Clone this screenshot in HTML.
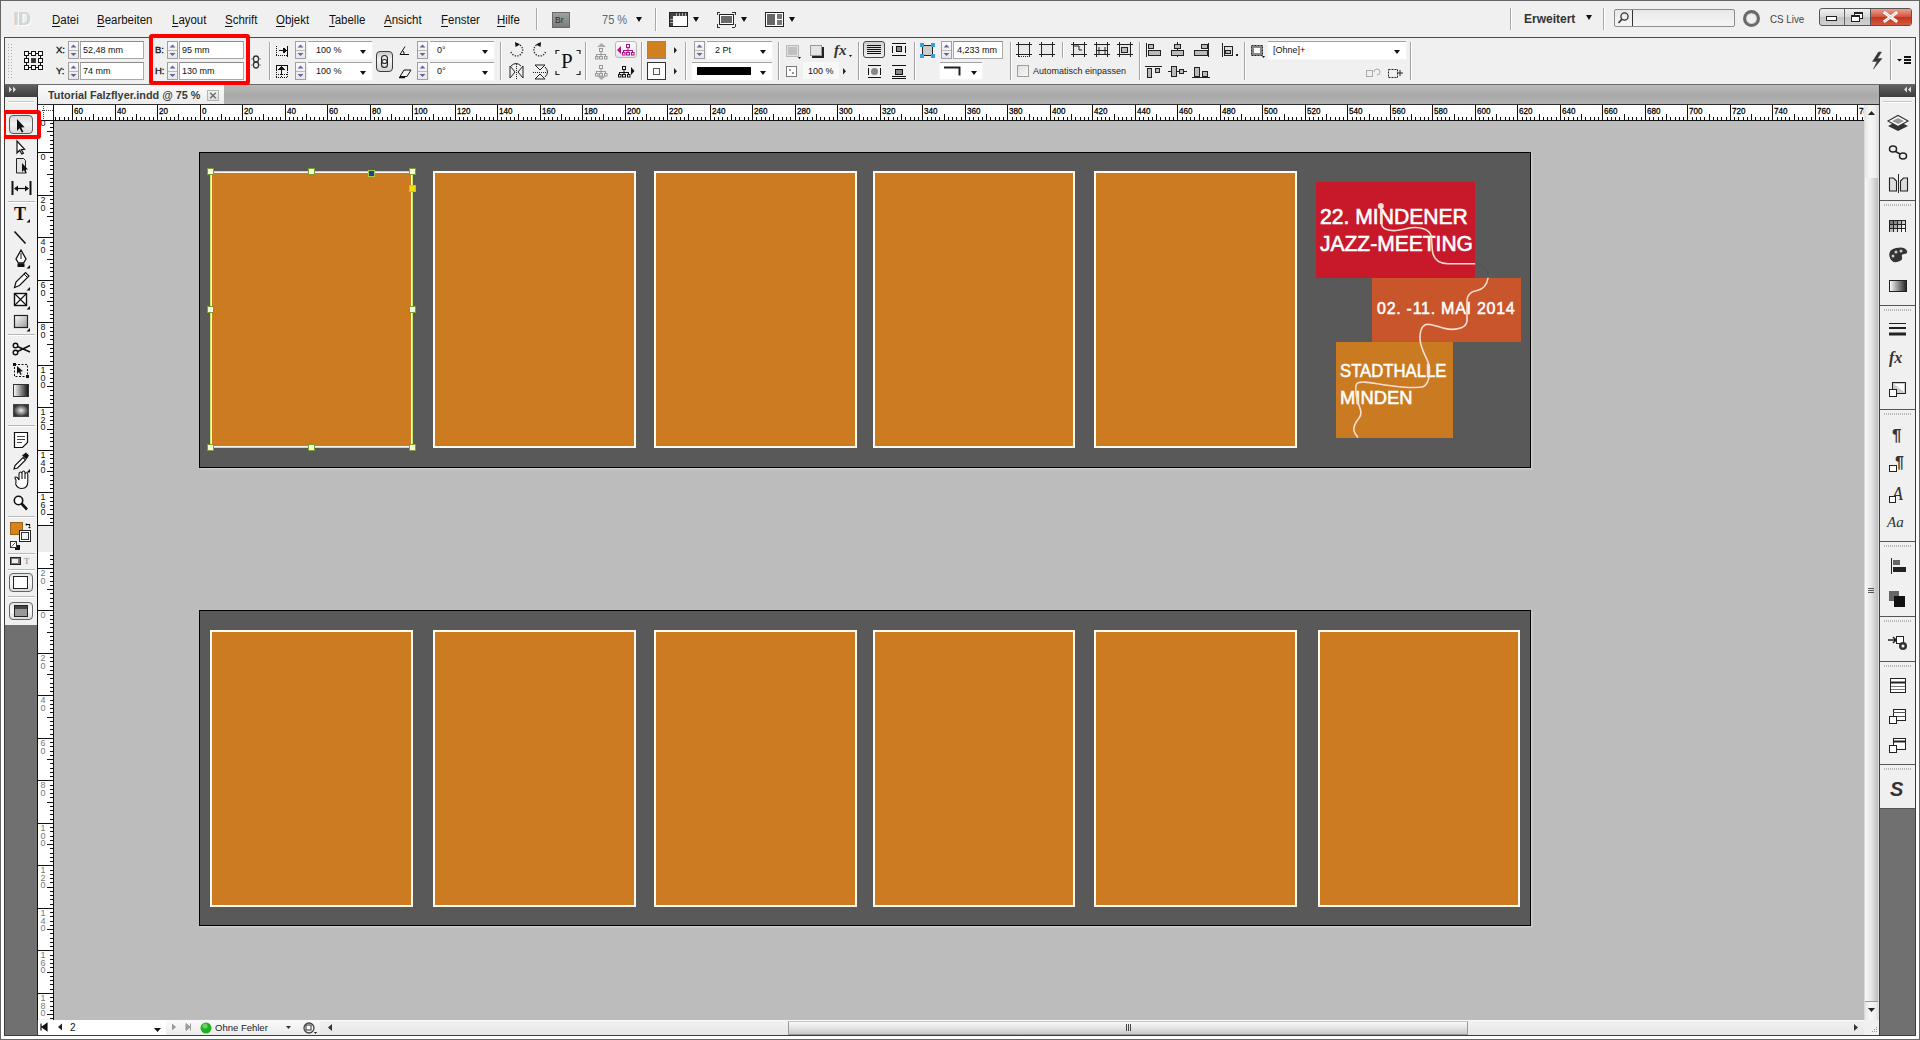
<!DOCTYPE html>
<html><head><meta charset="utf-8">
<style>
*{margin:0;padding:0;box-sizing:border-box}
html,body{width:1920px;height:1040px;overflow:hidden;background:#f0f0f0;font-family:"Liberation Sans",sans-serif;position:relative}
.a{position:absolute}
.fr{background:#cc7b21;border:2px solid #fffaf0}
.hd{width:7px;height:7px;background:#f2fcd8;border:1px solid #7c9c30}
.rl{font-size:9.5px;color:#000;-webkit-text-stroke:0.3px #000;transform:scaleX(0.85);transform-origin:0 0}
.vl{font-size:9px;line-height:7.7px;width:6px;text-align:center;color:#111}
.vl div{height:7.7px}
.mn{font-size:12px;color:#111;transform:scaleX(0.955);transform-origin:0 0}
.mn u{text-decoration:underline;text-underline-offset:1.5px}
.spn{border:1px solid #a0a0a0;background:linear-gradient(#fafafa,#e8e8e8)}
.inb{background:#fff;border:1px solid #a8a8a8;border-top-color:#8a8a8a}
.ind{background:#fff;border-top:1px solid #a0a0a0;box-shadow:0 0 0 1px #f4f4f4}
.ct{font-size:9px;color:#111}
.cl{font-size:9.5px;color:#1a1a1a;-webkit-text-stroke:0.35px #1a1a1a}
.t{position:absolute;white-space:pre;line-height:1}
</style></head><body>
<!-- window border -->
<div class="a" style="left:0;top:0;width:1920px;height:1040px;border:1px solid #666"></div>

<!-- ===== MENU BAR ===== -->
<!--MENU-->
<div class="t" style="left:14px;top:9px;font-size:19px;font-weight:bold;color:#d6d6d6;text-shadow:1px 1px 0 #fff, -0.5px -0.5px 0 #c4c4c4;transform:scaleX(0.9);transform-origin:0 0">ID</div>
<div class="t mn" style="left:52px;top:14px"><u>D</u>atei</div>
<div class="t mn" style="left:97px;top:14px"><u>B</u>earbeiten</div>
<div class="t mn" style="left:172px;top:14px"><u>L</u>ayout</div>
<div class="t mn" style="left:225px;top:14px"><u>S</u>chrift</div>
<div class="t mn" style="left:276px;top:14px"><u>O</u>bjekt</div>
<div class="t mn" style="left:329px;top:14px"><u>T</u>abelle</div>
<div class="t mn" style="left:384px;top:14px"><u>A</u>nsicht</div>
<div class="t mn" style="left:441px;top:14px"><u>F</u>enster</div>
<div class="t mn" style="left:497px;top:14px"><u>H</u>ilfe</div>
<div class="a" style="left:536px;top:8px;width:1px;height:22px;background:#a8a8a8;box-shadow:1px 0 0 #fff"></div>
<div class="a" style="left:552px;top:12px;width:18px;height:16px;background:linear-gradient(#a0a0a0,#7c7c7c);border:1px solid #6a6a6a"></div>
<div class="t" style="left:555px;top:16px;font-size:8.5px;color:#2a2a2a">Br</div>
<div class="t" style="left:602px;top:14px;font-size:12px;color:#5d6a76;transform:scaleX(0.92);transform-origin:0 0">75 %</div>
<div class="a" style="left:636px;top:17px;width:0;height:0;border-left:3.5px solid transparent;border-right:3.5px solid transparent;border-top:5px solid #111"></div>
<div class="a" style="left:655px;top:8px;width:1px;height:23px;background:#a8a8a8;box-shadow:1px 0 0 #fff"></div>
<svg class="a" style="left:660px;top:8px" width="140" height="24" shape-rendering="crispEdges">
<rect x="9.5" y="4.5" width="18" height="14" fill="#fff" stroke="#222"/>
<rect x="10" y="5" width="17" height="3" fill="#444"/><rect x="10" y="5" width="3" height="13" fill="#444"/>
<path d="M16 5v3M19 5v3M22 5v3M25 5v3M10 11h3M10 14h3" stroke="#aaa"/>
<path d="M57 4h3M57 4v3M75 4h-3M75 4v3M57 19h3M57 19v-3M75 19h-3M75 19v-3" stroke="#333" fill="none"/>
<rect x="59.5" y="6.5" width="14" height="10" fill="#fff" stroke="#222"/><rect x="61" y="8" width="11" height="7" fill="#6a6a6a"/>
<rect x="105.5" y="4.5" width="18" height="14" fill="#fff" stroke="#222"/>
<rect x="107" y="6" width="8" height="11" fill="#666"/><rect x="117" y="6" width="5" height="5" fill="#777"/><rect x="117" y="12" width="5" height="5" fill="#777"/>
</svg>
<div class="a" style="left:693px;top:17px;width:0;height:0;border-left:3.5px solid transparent;border-right:3.5px solid transparent;border-top:5px solid #111"></div>
<div class="a" style="left:741px;top:17px;width:0;height:0;border-left:3.5px solid transparent;border-right:3.5px solid transparent;border-top:5px solid #111"></div>
<div class="a" style="left:789px;top:17px;width:0;height:0;border-left:3.5px solid transparent;border-right:3.5px solid transparent;border-top:5px solid #111"></div>
<div class="a" style="left:1510px;top:8px;width:1px;height:22px;background:#a8a8a8;box-shadow:1px 0 0 #fff"></div>
<div class="t" style="left:1524px;top:12.5px;font-size:12px;font-weight:bold;color:#333">Erweitert</div>
<div class="a" style="left:1586px;top:15px;width:0;height:0;border-left:3.5px solid transparent;border-right:3.5px solid transparent;border-top:5px solid #111"></div>
<div class="a" style="left:1603px;top:8px;width:1px;height:22px;background:#a8a8a8;box-shadow:1px 0 0 #fff"></div>
<div class="a" style="left:1614px;top:9px;width:121px;height:18px;background:linear-gradient(#e8e8e8,#f6f6f6);border:1px solid #8c8c8c;border-radius:2px"></div>
<div class="a" style="left:1632px;top:10px;width:1px;height:16px;background:#333"></div>
<svg class="a" style="left:1614px;top:9px" width="20" height="18"><circle cx="10.5" cy="7.5" r="3.6" fill="none" stroke="#333" stroke-width="1.3"/><path d="M8 10 L4.5 14" stroke="#333" stroke-width="1.6"/></svg>
<div class="a" style="left:1743px;top:10px;width:17px;height:17px;border-radius:50%;border:3.5px solid #6a6a6a;box-shadow:inset 0 0 1px #333"></div>
<div class="t" style="left:1770px;top:14px;font-size:10.5px;color:#444;transform:scaleX(0.93);transform-origin:0 0">CS Live</div>
<div class="a" style="left:1819px;top:8px;width:93px;height:18px;border:1px solid #555;border-radius:3px;background:linear-gradient(#f0f0f0,#d8d8d8 50%,#c4c4c4 51%,#d0d0d0);overflow:hidden"></div>
<div class="a" style="left:1844px;top:9px;width:1px;height:16px;background:#666"></div>
<div class="a" style="left:1870px;top:9px;width:41px;height:16px;background:linear-gradient(#e9a090,#d2533c 50%,#c03820 51%,#d25a40);border-left:1px solid #555;border-radius:0 2px 2px 0"></div>
<div class="a" style="left:1826px;top:16px;width:11px;height:5px;border:1px solid #222;background:#fff"></div>
<svg class="a" style="left:1846px;top:9px" width="24" height="16" shape-rendering="crispEdges"><rect x="8.5" y="3.5" width="8" height="6" fill="#fff" stroke="#222"/><rect x="5.5" y="6.5" width="8" height="6" fill="#fff" stroke="#222"/><path d="M6 7.5h7M9 4.5h7" stroke="#222"/></svg>
<svg class="a" style="left:1870px;top:9px" width="41" height="16"><path d="M15 4 L26 12 M26 4 L15 12" stroke="#fff" stroke-width="3" stroke-linecap="square"/><path d="M15 4 L26 12 M26 4 L15 12" stroke="#555" stroke-width="0.6" opacity="0.4"/></svg>
<!--/MENU-->

<!-- ===== CONTROL PANEL ===== -->
<div class="a" style="left:4px;top:37px;width:1912px;height:48px;border:1px solid #4a4a4a;border-bottom-color:#6a6a6a;background:#f0f0f0"></div>
<!--CTRL-->
<div class="t cl" style="left:56px;top:45px">X:</div>
<div class="t cl" style="left:56px;top:66px">Y:</div>
<div class="a spn" style="left:68px;top:41px;width:11px;height:18px"></div>
<div class="a spn" style="left:68px;top:62px;width:11px;height:18px"></div>
<div class="a inb" style="left:80px;top:41px;width:64px;height:18px"></div>
<div class="t ct" style="left:83px;top:46px">52,48 mm</div>
<div class="a inb" style="left:80px;top:62px;width:64px;height:18px"></div>
<div class="t ct" style="left:83px;top:67px">74 mm</div>
<div class="t cl" style="left:155px;top:45px">B:</div>
<div class="t cl" style="left:155px;top:66px">H:</div>
<div class="a spn" style="left:167px;top:41px;width:11px;height:18px"></div>
<div class="a spn" style="left:167px;top:62px;width:11px;height:18px"></div>
<div class="a inb" style="left:179px;top:41px;width:65px;height:18px"></div>
<div class="t ct" style="left:182px;top:46px">95 mm</div>
<div class="a inb" style="left:179px;top:62px;width:65px;height:18px"></div>
<div class="t ct" style="left:182px;top:67px">130 mm</div>
<div class="a" style="left:269px;top:42px;width:1px;height:38px;background:#a4a4a4;box-shadow:1px 0 0 #fff"></div>
<div class="a spn" style="left:295px;top:41px;width:11px;height:18px"></div>
<div class="a spn" style="left:295px;top:62px;width:11px;height:18px"></div>
<div class="a ind" style="left:308px;top:41px;width:64px;height:18px"></div>
<div class="t ct" style="left:316px;top:46px">100 %</div>
<div class="a" style="left:360px;top:50px;width:0;height:0;border-left:3.5px solid transparent;border-right:3.5px solid transparent;border-top:4px solid #111"></div>
<div class="a ind" style="left:308px;top:62px;width:64px;height:18px"></div>
<div class="t ct" style="left:316px;top:67px">100 %</div>
<div class="a" style="left:360px;top:71px;width:0;height:0;border-left:3.5px solid transparent;border-right:3.5px solid transparent;border-top:4px solid #111"></div>
<div class="a" style="left:376px;top:51px;width:17px;height:21px;border:1px solid #3c3c3c;border-radius:4px;background:linear-gradient(#c8c8c8,#f4f4f4 40%,#d4d4d4)"></div>
<div class="a spn" style="left:417px;top:41px;width:11px;height:18px"></div>
<div class="a spn" style="left:417px;top:62px;width:11px;height:18px"></div>
<div class="a ind" style="left:430px;top:41px;width:64px;height:18px"></div>
<div class="t ct" style="left:437px;top:46px">0°</div>
<div class="a" style="left:482px;top:50px;width:0;height:0;border-left:3.5px solid transparent;border-right:3.5px solid transparent;border-top:4px solid #111"></div>
<div class="a ind" style="left:430px;top:62px;width:64px;height:18px"></div>
<div class="t ct" style="left:437px;top:67px">0°</div>
<div class="a" style="left:482px;top:71px;width:0;height:0;border-left:3.5px solid transparent;border-right:3.5px solid transparent;border-top:4px solid #111"></div>
<div class="a" style="left:500px;top:42px;width:1px;height:38px;background:#a4a4a4;box-shadow:1px 0 0 #fff"></div>
<div class="t" style="left:561px;top:51px;font-family:'Liberation Serif',serif;font-size:21px;color:#111">P</div>
<div class="a" style="left:585px;top:42px;width:1px;height:38px;background:#a4a4a4;box-shadow:1px 0 0 #fff"></div>
<div class="a" style="left:615px;top:41px;width:22px;height:17px;border:1px solid #b8b8b8;border-radius:3px;background:linear-gradient(#fafafa,#e4e4e4)"></div>
<div class="a" style="left:641px;top:42px;width:1px;height:38px;background:#a4a4a4;box-shadow:1px 0 0 #fff"></div>
<div class="a" style="left:647px;top:41px;width:19px;height:18px;border:1px solid #888;background:#d27f20"></div>
<div class="a" style="left:647px;top:62px;width:19px;height:18px;border:1px solid #333;background:#fff"></div>
<div class="a" style="left:653px;top:68px;width:7px;height:7px;border:1px solid #555;background:#fff"></div>
<div class="a" style="left:685px;top:42px;width:1px;height:38px;background:#a4a4a4;box-shadow:1px 0 0 #fff"></div>
<div class="a spn" style="left:694px;top:41px;width:11px;height:18px"></div>
<div class="a ind" style="left:707px;top:41px;width:65px;height:18px"></div>
<div class="t ct" style="left:715px;top:46px">2 Pt</div>
<div class="a" style="left:760px;top:50px;width:0;height:0;border-left:3.5px solid transparent;border-right:3.5px solid transparent;border-top:4px solid #111"></div>
<div class="a ind" style="left:692px;top:62px;width:80px;height:18px"></div>
<div class="a" style="left:697px;top:67px;width:54px;height:8px;background:#000"></div>
<div class="a" style="left:760px;top:71px;width:0;height:0;border-left:3.5px solid transparent;border-right:3.5px solid transparent;border-top:4px solid #111"></div>
<div class="a" style="left:778px;top:42px;width:1px;height:38px;background:#a4a4a4;box-shadow:1px 0 0 #fff"></div>
<div class="t" style="left:834px;top:43px;font-family:'Liberation Serif',serif;font-style:italic;font-weight:bold;font-size:15px;color:#333">fx</div>
<div class="a" style="left:803px;top:62px;width:36px;height:17px;background:#f8f8f8"></div>
<div class="t ct" style="left:808px;top:67px">100 %</div>
<div class="a" style="left:858px;top:42px;width:1px;height:38px;background:#a4a4a4;box-shadow:1px 0 0 #fff"></div>
<div class="a" style="left:863px;top:41px;width:22px;height:17px;border:1px solid #4a4a4a;border-radius:3px;background:linear-gradient(#d0d0d0,#f0f0f0)"></div>
<div class="a" style="left:914px;top:42px;width:1px;height:38px;background:#a4a4a4;box-shadow:1px 0 0 #fff"></div>
<div class="a spn" style="left:941px;top:41px;width:11px;height:18px"></div>
<div class="a inb" style="left:953px;top:41px;width:50px;height:18px"></div>
<div class="t ct" style="left:957px;top:46px">4,233 mm</div>
<div class="a ind" style="left:940px;top:62px;width:42px;height:17px"></div>
<div class="a" style="left:971px;top:71px;width:0;height:0;border-left:3.5px solid transparent;border-right:3.5px solid transparent;border-top:4px solid #111"></div>
<div class="a" style="left:1010px;top:42px;width:1px;height:38px;background:#a4a4a4;box-shadow:1px 0 0 #fff"></div>
<div class="a" style="left:1062px;top:42px;width:1px;height:16px;background:#a4a4a4;box-shadow:1px 0 0 #fff"></div>
<div class="a" style="left:1017px;top:65px;width:12px;height:12px;border:1px solid #9c9c9c;background:linear-gradient(135deg,#e0e0e0,#f8f8f8)"></div>
<div class="t ct" style="left:1033px;top:67px;color:#222">Automatisch einpassen</div>
<div class="a" style="left:1139px;top:42px;width:1px;height:38px;background:#a4a4a4;box-shadow:1px 0 0 #fff"></div>
<div class="a" style="left:1244px;top:42px;width:1px;height:38px;background:#a4a4a4;box-shadow:1px 0 0 #fff"></div>
<div class="a ind" style="left:1268px;top:41px;width:138px;height:18px"></div>
<div class="t ct" style="left:1273px;top:46px">[Ohne]+</div>
<div class="a" style="left:1394px;top:50px;width:0;height:0;border-left:3.5px solid transparent;border-right:3.5px solid transparent;border-top:4px solid #111"></div>
<div class="a" style="left:1410px;top:42px;width:1px;height:38px;background:#a4a4a4;box-shadow:1px 0 0 #fff"></div>
<div class="a" style="left:1890px;top:40px;width:1px;height:40px;background:#a4a4a4;box-shadow:1px 0 0 #fff"></div>
<svg class="a" style="left:0;top:0" width="1920" height="90"><g fill="#b0b0b0"><rect x="8" y="44" width="1" height="1"/><rect x="11" y="44" width="1" height="1"/><rect x="8" y="47" width="1" height="1"/><rect x="11" y="47" width="1" height="1"/><rect x="8" y="50" width="1" height="1"/><rect x="11" y="50" width="1" height="1"/><rect x="8" y="53" width="1" height="1"/><rect x="11" y="53" width="1" height="1"/><rect x="8" y="56" width="1" height="1"/><rect x="11" y="56" width="1" height="1"/><rect x="8" y="59" width="1" height="1"/><rect x="11" y="59" width="1" height="1"/><rect x="8" y="62" width="1" height="1"/><rect x="11" y="62" width="1" height="1"/><rect x="8" y="65" width="1" height="1"/><rect x="11" y="65" width="1" height="1"/><rect x="8" y="68" width="1" height="1"/><rect x="11" y="68" width="1" height="1"/><rect x="8" y="71" width="1" height="1"/><rect x="11" y="71" width="1" height="1"/><rect x="8" y="74" width="1" height="1"/><rect x="11" y="74" width="1" height="1"/><rect x="8" y="77" width="1" height="1"/><rect x="11" y="77" width="1" height="1"/></g>
<path d="M29 53.5h2M36 53.5h2M29 67.5h2M36 67.5h2M26.5 56v2M26.5 63v2M40.5 56v2M40.5 63v2" stroke="#111"/><rect x="24.5" y="51.5" width="4" height="4" fill="#fff" stroke="#111"/><rect x="24.5" y="58.5" width="4" height="4" fill="#fff" stroke="#111"/><rect x="24.5" y="65.5" width="4" height="4" fill="#fff" stroke="#111"/><rect x="31.5" y="51.5" width="4" height="4" fill="#fff" stroke="#111"/><rect x="31.5" y="58.5" width="4" height="4" fill="#333" stroke="#444"/><rect x="31.5" y="65.5" width="4" height="4" fill="#fff" stroke="#111"/><rect x="38.5" y="51.5" width="4" height="4" fill="#fff" stroke="#111"/><rect x="38.5" y="58.5" width="4" height="4" fill="#fff" stroke="#111"/><rect x="38.5" y="65.5" width="4" height="4" fill="#fff" stroke="#111"/>
<path d="M70.5,47.5 L76.5,47.5 L73.5,44.5Z M70.5,53 L76.5,53 L73.5,56Z" fill="#6464a0"/>
<line x1="69" y1="50.5" x2="78" y2="50.5" stroke="#b8b8b8"/>
<path d="M70.5,68.5 L76.5,68.5 L73.5,65.5Z M70.5,74 L76.5,74 L73.5,77Z" fill="#6464a0"/>
<line x1="69" y1="71.5" x2="78" y2="71.5" stroke="#b8b8b8"/>
<path d="M169.5,47.5 L175.5,47.5 L172.5,44.5Z M169.5,53 L175.5,53 L172.5,56Z" fill="#6464a0"/>
<line x1="168" y1="50.5" x2="177" y2="50.5" stroke="#b8b8b8"/>
<path d="M169.5,68.5 L175.5,68.5 L172.5,65.5Z M169.5,74 L175.5,74 L172.5,77Z" fill="#6464a0"/>
<line x1="168" y1="71.5" x2="177" y2="71.5" stroke="#b8b8b8"/>
<g fill="none" stroke="#333" stroke-width="1.3"><rect x="253.5" y="56" width="5" height="6" rx="2.5"/><rect x="253.5" y="62" width="5" height="6" rx="2.5"/></g><path d="M251 59h2M259 59h2M251 65h2M259 65h2" stroke="#888"/>
<g stroke="#111" fill="none" shape-rendering="crispEdges"><path d="M276.5 46v10M276 55.5h12" stroke-dasharray="1,1"/><path d="M287.5 46v11"/><path d="M279 50.5h5"/><path d="M283 48 l3.5 2.5 -3.5 2.5z" fill="#111"/><path d="M276 65.5h12M276.5 65v6M287.5 65v6"/><path d="M276 74.5h12M276 77.5h12M276.5 72v6M281.5 72v6M287.5 72v6" stroke-dasharray="1,1"/><path d="M281.5 68v6"/><path d="M279 69.5 l2.5-3 2.5 3z" fill="#111"/></g>
<path d="M297.5,47.5 L303.5,47.5 L300.5,44.5Z M297.5,53 L303.5,53 L300.5,56Z" fill="#6464a0"/>
<line x1="296" y1="50.5" x2="305" y2="50.5" stroke="#b8b8b8"/>
<path d="M297.5,68.5 L303.5,68.5 L300.5,65.5Z M297.5,74 L303.5,74 L300.5,77Z" fill="#6464a0"/>
<line x1="296" y1="71.5" x2="305" y2="71.5" stroke="#b8b8b8"/>
<g fill="none" stroke="#222" stroke-width="1.1"><rect x="381.5" y="55.5" width="6" height="8" rx="3"/><rect x="381.5" y="59.5" width="6" height="8" rx="3"/></g>
<g stroke="#111" fill="none"><path d="M400 54.5h9M400 54.5 L405 46.5 M402.5 50.5 q2 1 1.5 4"/></g>
<g stroke="#111" fill="none"><path d="M400 76.5 L404 70 L411 70 L407 76.5Z"/><path d="M399 77.5 L405 77.5" stroke-width="1.5"/></g>
<path d="M419.5,47.5 L425.5,47.5 L422.5,44.5Z M419.5,53 L425.5,53 L422.5,56Z" fill="#6464a0"/>
<line x1="418" y1="50.5" x2="427" y2="50.5" stroke="#b8b8b8"/>
<path d="M419.5,68.5 L425.5,68.5 L422.5,65.5Z M419.5,74 L425.5,74 L422.5,77Z" fill="#6464a0"/>
<line x1="418" y1="71.5" x2="427" y2="71.5" stroke="#b8b8b8"/>
<g stroke="#222" fill="none" stroke-dasharray="1.3,1.3" stroke-width="1.3"><path d="M511 52 A6 6 0 1 0 516 44"/><path d="M545.5 52 A6 6 0 1 1 540.5 44"/></g>
<path d="M515 42 l5 2.5 -4.5 2.5z M541 42 l-5 2.5 4.5 2.5z" fill="#111"/>
<g stroke="#222" fill="none" stroke-width="1"><path d="M510 66v12l5-6z M523 66v12l-5-6z"/><path d="M516.5 64v15" stroke-dasharray="1,1"/><path d="M511 66 q5-5 10 0" /></g>
<g stroke="#222" fill="none" stroke-width="1"><path d="M535 65h10l-5 5z M535 79h10l-5-5z"/><path d="M533 72.5h14" stroke-dasharray="1,1"/><path d="M545 67 q5 5 0 10"/></g>
<path d="M556 54v-3.5h3.5M580 54v-3.5h-3.5M556 71v3.5h3.5M580 71v3.5h-3.5" stroke="#222" fill="none" stroke-width="1.2"/>
<path d="M597 47h9l-4.5-4z" fill="#aaa"/><g stroke="#999" fill="none" stroke-width="1"><rect x="599.5" y="48.5" width="3" height="3"/><path d="M601 52v2M596.5 54.5h9M596.5 54v2M601 54v2M605.5 54v2"/><rect x="595.5" y="56.5" width="2.5" height="2.5"/><rect x="599.5" y="56.5" width="3" height="2.5"/><rect x="604.5" y="56.5" width="2.5" height="2.5"/></g>
<g stroke="#999" fill="none" stroke-width="1"><rect x="599.5" y="65.5" width="3" height="3"/><path d="M601 69v2M596.5 71.5h9M596.5 71v2M601 71v2M605.5 71v2"/><rect x="595.5" y="73.5" width="2.5" height="2.5"/><rect x="599.5" y="73.5" width="3" height="2.5"/><rect x="604.5" y="73.5" width="2.5" height="2.5"/></g><path d="M597 76h9l-4.5 4z" fill="#aaa"/>
<path d="M617 50l4-4v8z" fill="#b0148c"/><g stroke="#b0148c" fill="none" stroke-width="1"><rect x="626.5" y="44.5" width="3" height="3"/><path d="M628 48v2M623.5 50.5h9M623.5 50v2M628 50v2M632.5 50v2"/><rect x="622.5" y="52.5" width="2.5" height="2.5"/><rect x="626.5" y="52.5" width="3" height="2.5"/><rect x="631.5" y="52.5" width="2.5" height="2.5"/></g>
<g stroke="#111" fill="none" stroke-width="1"><rect x="622.5" y="66.5" width="3" height="3"/><path d="M624 70v2M619.5 72.5h9M619.5 72v2M624 72v2M628.5 72v2"/><rect x="618.5" y="74.5" width="2.5" height="2.5"/><rect x="622.5" y="74.5" width="3" height="2.5"/><rect x="627.5" y="74.5" width="2.5" height="2.5"/></g><path d="M631 67l3.5 4-3.5 4z" fill="#111"/>
<path d="M674 47l3 3.2-3 3.2z M674 68l3 3.2-3 3.2z" fill="#222"/>
<path d="M696.5,47.5 L702.5,47.5 L699.5,44.5Z M696.5,53 L702.5,53 L699.5,56Z" fill="#6464a0"/>
<line x1="695" y1="50.5" x2="704" y2="50.5" stroke="#b8b8b8"/>
<rect x="786.5" y="45.5" width="12" height="11" fill="#e0e0e0" stroke="#888" stroke-dasharray="1,1"/><rect x="788" y="47" width="9" height="8" fill="#aaa" opacity="0.6"/><path d="M798 57h3l-1.5 2z" fill="#111"/>
<rect x="812" y="47" width="12" height="11" fill="#222"/><rect x="810.5" y="45.5" width="11" height="10" fill="#e4e4e4" stroke="#999"/>
<path d="M849 55h3l-1.5 2z" fill="#111"/>
<rect x="786.5" y="66.5" width="10" height="10" fill="#fff" stroke="#777"/><rect x="789" y="69" width="2" height="2" fill="#999"/><rect x="792" y="72" width="2" height="2" fill="#999"/>
<path d="M843 68l3 3.2-3 3.2z" fill="#222"/>
<g stroke="#111" shape-rendering="crispEdges"><line x1="867" y1="45.5" x2="881" y2="45.5"/><line x1="867" y1="47.5" x2="881" y2="47.5"/><line x1="867" y1="49.5" x2="881" y2="49.5"/><line x1="867" y1="51.5" x2="881" y2="51.5"/><line x1="867" y1="53.5" x2="881" y2="53.5"/></g>
<g stroke="#111" shape-rendering="crispEdges"><line x1="892" y1="43.5" x2="906" y2="43.5"/><line x1="892" y1="55.5" x2="906" y2="55.5"/><path d="M892.5 46v7M905.5 46v7"/><rect x="896.5" y="46.5" width="5" height="5" fill="#888"/></g>
<g stroke="#111" shape-rendering="crispEdges"><line x1="868" y1="65.5" x2="881" y2="65.5"/><line x1="868" y1="77.5" x2="881" y2="77.5"/><path d="M868.5 68v7M880.5 68v7"/></g><circle cx="874.5" cy="71.5" r="3.5" fill="#888"/>
<g stroke="#111" shape-rendering="crispEdges"><line x1="892" y1="65.5" x2="906" y2="65.5"/><line x1="892" y1="76.5" x2="906" y2="76.5"/><line x1="892" y1="78.5" x2="906" y2="78.5"/><rect x="895.5" y="69.5" width="7" height="5" fill="#888"/></g>
<rect x="922.5" y="45.5" width="10" height="10" fill="#ccc" stroke="#222"/><g fill="#3aa0dc"><rect x="920" y="43" width="4" height="4"/><rect x="931" y="43" width="4" height="4"/><rect x="920" y="54" width="4" height="4"/><rect x="931" y="54" width="4" height="4"/></g>
<path d="M943.5,47.5 L949.5,47.5 L946.5,44.5Z M943.5,53 L949.5,53 L946.5,56Z" fill="#6464a0"/>
<line x1="942" y1="50.5" x2="951" y2="50.5" stroke="#b8b8b8"/>
<path d="M944 67.5h15.5v8" stroke="#222" stroke-width="2" fill="none"/>
<g stroke="#222" fill="none"><rect x="1018.5" y="44.5" width="11" height="10" fill="#e8e8e8"/><path d="M1016 44.5h3M1029 44.5h3M1016 54.5h3M1029 54.5h3M1018.5 42v3M1029.5 42v3M1018.5 54v3M1029.5 54v3"/></g>
<g stroke="#222" fill="none"><rect x="1041.5" y="44.5" width="11" height="10" fill="#e8e8e8"/><path d="M1039 44.5h3M1052 44.5h3M1039 54.5h3M1052 54.5h3M1041.5 42v3M1052.5 42v3M1041.5 54v3M1052.5 54v3"/></g>
<g stroke="#222" fill="none"><rect x="1073.5" y="44.5" width="11" height="10" fill="#e8e8e8"/><path d="M1071 44.5h3M1084 44.5h3M1071 54.5h3M1084 54.5h3M1073.5 42v3M1084.5 42v3M1073.5 54v3M1084.5 54v3"/></g>
<g stroke="#222" fill="none"><rect x="1096.5" y="44.5" width="11" height="10" fill="#e8e8e8"/><path d="M1094 44.5h3M1107 44.5h3M1094 54.5h3M1107 54.5h3M1096.5 42v3M1107.5 42v3M1096.5 54v3M1107.5 54v3"/></g>
<g stroke="#222" fill="none"><rect x="1119.5" y="44.5" width="11" height="10" fill="#e8e8e8"/><path d="M1117 44.5h3M1130 44.5h3M1117 54.5h3M1130 54.5h3M1119.5 42v3M1130.5 42v3M1119.5 54v3M1130.5 54v3"/></g>
<path d="M1019 56.5h10" stroke="#222" stroke-dasharray="1,1"/><path d="M1074 46h5v4h3" stroke="#222" fill="none"/><path d="M1099 47v7M1105 47v7M1097 50.5h10" stroke="#222"/><rect x="1121.5" y="47.5" width="6" height="5" fill="#bbb" stroke="#222"/>
<g stroke="#222" fill="#bbb" shape-rendering="crispEdges"><path d="M1146.5 43v14" fill="none"/><rect x="1148.5" y="44.5" width="5" height="4"/><rect x="1148.5" y="50.5" width="12" height="5"/><path d="M1177.5 42v15" fill="none"/><rect x="1174.5" y="44.5" width="6" height="4"/><rect x="1171.5" y="50.5" width="12" height="5"/><path d="M1208.5 43v14" fill="none"/><rect x="1201.5" y="44.5" width="6" height="4"/><rect x="1194.5" y="50.5" width="13" height="5"/><path d="M1222.5 43v14" fill="none"/><rect x="1224.5" y="46.5" width="8" height="9" fill="#e0e0e0"/><rect x="1225.5" y="50.5" width="5" height="3"/></g><rect x="1236" y="54" width="2" height="2" fill="#222"/>
<g stroke="#222" fill="#bbb" shape-rendering="crispEdges"><path d="M1145 66.5h17" fill="none"/><rect x="1147.5" y="68.5" width="4" height="9"/><rect x="1155.5" y="68.5" width="4" height="4"/><path d="M1168 71.5h19" fill="none"/><rect x="1171.5" y="66.5" width="5" height="10"/><rect x="1179.5" y="69.5" width="4" height="4"/><path d="M1192 77.5h18" fill="none"/><rect x="1194.5" y="67.5" width="5" height="9"/><rect x="1202.5" y="71.5" width="5" height="5"/></g>
<rect x="1251.5" y="45.5" width="11" height="10" fill="#888" stroke="#222" stroke-dasharray="2,1"/><rect x="1254" y="48" width="6" height="5" fill="#fff"/><path d="M1262 56h3l-1.5 2z" fill="#111"/>
<g stroke="#aaa" fill="none"><rect x="1366.5" y="70.5" width="6" height="6"/><path d="M1374 72 a3 3 0 1 1 3 3"/></g><g stroke="#222" fill="none"><rect x="1388.5" y="69.5" width="9" height="8" stroke-dasharray="2,1"/><path d="M1400 70v6M1397 73h6"/></g>
<path d="M1878.5 52 L1872.5 61.5 L1877 61.5 L1873.5 69 L1882 58.5 L1877.5 58.5 L1881.5 52Z" fill="#333" stroke="#555" stroke-width="0.6"/>
<path d="M1897 59h5l-2.5 2.5z" fill="#111"/><g stroke="#111" stroke-width="2"><path d="M1904 57h7M1904 60h7M1904 63h7"/></g></svg>
<div class="a" style="left:149px;top:34px;width:101px;height:51px;border:4.5px solid #f00;border-radius:3px"></div>
<!--/CTRL-->

<!-- ===== TAB BAR ===== -->
<div class="a" style="left:38px;top:85px;width:1841px;height:19px;background:linear-gradient(#b9b9b9,#a9a9a9 55%,#b3b3b3)"></div>
<div class="a" style="left:38px;top:85px;width:186px;height:19px;background:linear-gradient(#fafafa,#ececec)"></div>


<!-- left outer strip & tool panel -->
<div class="a" style="left:4px;top:85px;width:34px;height:951px;background:#707070;border-left:1px solid #3c3c3c;border-right:1px solid #3c3c3c"></div>
<div class="a" style="left:5px;top:85px;width:32px;height:12px;background:linear-gradient(#606060,#3e3e3e)"></div>
<div class="a" style="left:5px;top:97px;width:32px;height:528px;background:#f0f0f0"></div>


<!-- right dock -->
<div class="a" style="left:1879px;top:85px;width:37px;height:951px;background:#707070;border-left:1px solid #3c3c3c;border-right:1px solid #3c3c3c"></div>
<div class="a" style="left:1880px;top:85px;width:35px;height:12px;background:linear-gradient(#606060,#3e3e3e)"></div>
<div class="a" style="left:1880px;top:97px;width:35px;height:712px;background:#f0f0f0"></div>


<!-- ===== CANVAS ===== -->
<div class="a" style="left:54px;top:121px;width:1810px;height:899px;background:#bcbcbc"></div>

<!-- spread 1 -->
<div class="a" style="left:199px;top:152px;width:1332px;height:316px;background:#595959;border:1px solid #000;box-shadow:1px 1px 0 #cdcdcd,2px 2px 0 #c4c4c4"></div>
<div class="a fr" style="left:210px;top:171px;width:203px;height:277px"></div>
<div class="a fr" style="left:433px;top:171px;width:203px;height:277px"></div>
<div class="a fr" style="left:654px;top:171px;width:203px;height:277px"></div>
<div class="a fr" style="left:873px;top:171px;width:202px;height:277px"></div>
<div class="a fr" style="left:1094px;top:171px;width:203px;height:277px"></div>
<!-- spread 2 -->
<div class="a" style="left:199px;top:610px;width:1332px;height:316px;background:#595959;border:1px solid #000;box-shadow:1px 1px 0 #cdcdcd,2px 2px 0 #c4c4c4"></div>
<div class="a fr" style="left:210px;top:630px;width:203px;height:277px"></div>
<div class="a fr" style="left:433px;top:630px;width:203px;height:277px"></div>
<div class="a fr" style="left:654px;top:630px;width:203px;height:277px"></div>
<div class="a fr" style="left:873px;top:630px;width:202px;height:277px"></div>
<div class="a fr" style="left:1094px;top:630px;width:203px;height:277px"></div>
<div class="a fr" style="left:1318px;top:630px;width:202px;height:277px"></div>


<!-- logo -->
<div class="a" style="left:1316px;top:182px;width:159px;height:96px;background:#c8192b"></div>
<div class="a" style="left:1372px;top:278px;width:149px;height:64px;background:#c9562a"></div>
<div class="a" style="left:1336px;top:342px;width:117px;height:96px;background:#ca7b22"></div>
<div class="t" style="left:1320px;top:206px;font-size:22px;color:#fff;-webkit-text-stroke:0.6px #fff;transform:scaleX(0.96);transform-origin:0 0">22. MINDENER</div>
<div class="t" style="left:1320px;top:233px;font-size:22px;color:#fff;-webkit-text-stroke:0.6px #fff;transform:scaleX(0.955);transform-origin:0 0">JAZZ-MEETING</div>
<div class="t" style="left:1377px;top:301px;font-size:16px;color:#fff;-webkit-text-stroke:0.5px #fff;letter-spacing:0.73px">02. -11. MAI 2014</div>
<div class="t" style="left:1340px;top:363px;font-size:17.5px;color:#fff;-webkit-text-stroke:0.5px #fff;transform:scaleX(0.955);transform-origin:0 0">STADTHALLE</div>
<div class="t" style="left:1340px;top:390px;font-size:17.5px;color:#fff;-webkit-text-stroke:0.5px #fff;transform:scaleX(1.05);transform-origin:0 0">MINDEN</div>
<svg class="a" style="left:0;top:0" width="1920" height="1040">
<g fill="none" stroke="#f9ddd2" stroke-width="1.6" stroke-linecap="round">
<path d="M1381,206 L1381.7,224 C1382,229 1388,231 1396,230.5 C1403,230 1410,227 1416,227.5 C1424,228 1431,231 1431.5,238 L1432.3,250 C1433,258 1438,263.5 1448,263.8 L1475,263.8"/>
<path d="M1488,278 C1487,285 1484,289 1477,290.5 C1471,291.5 1467.5,294 1467,300 L1467,320 C1467,326 1462,329 1452,329.4 C1442,329.5 1436,324.5 1428,324.2 C1422,324.5 1420,331 1420,338 C1420,350 1428,358 1429.4,367 C1430,374 1429,384 1423,386.8 C1415,389 1400,387 1383,384.7 C1372,383 1360,380 1356.4,384.2 C1355,388 1356,400 1359.6,406.9 C1361,411 1362,414 1359,418 C1355,423 1353,427 1354,431 C1355,434 1357,436 1357.5,437"/>
</g>
<circle cx="1380.8" cy="206" r="3" fill="#f9ddd2"/>
<path d="M1475,263.8 C1483,264 1489,270 1488,278" fill="none" stroke="#545456" stroke-width="1"/>
</svg>
<!-- selection handles -->
<div class="a" style="left:210px;top:171px;width:203px;height:277px;border:1px solid #c8e870"></div>
<div class="a hd" style="left:207px;top:168px"></div><div class="a hd" style="left:308px;top:168px"></div><div class="a hd" style="left:409px;top:168px"></div><div class="a hd" style="left:207px;top:306px"></div><div class="a hd" style="left:409px;top:306px"></div><div class="a hd" style="left:207px;top:444px"></div><div class="a hd" style="left:308px;top:444px"></div><div class="a hd" style="left:409px;top:444px"></div><div class="a" style="left:368px;top:170px;width:7px;height:7px;background:#1d3f9e;border:1px solid #a8c850"></div><div class="a" style="left:409px;top:185px;width:7px;height:7px;background:#f0e010;border:1px solid #d0c800"></div>
<!-- rulers -->
<!--RULERS-->
<div class="a" style="left:37px;top:104px;width:1842px;height:1px;background:#2a2a2a"></div>
<div class="a" style="left:38px;top:105px;width:1826px;height:15px;background:#fff"></div>
<div class="a" style="left:38px;top:120px;width:1826px;height:1px;background:#111"></div>
<div class="a" style="left:38px;top:121px;width:15px;height:898px;background:#fff"></div><div class="a" style="left:38px;top:525px;width:15px;height:27px;background:#ececec;border-top:1px solid #111"></div>
<svg class="a" style="left:0;top:0" width="1920" height="1040" shape-rendering="crispEdges"><g stroke="#111" stroke-width="1">
<line x1="55.5" y1="117" x2="55.5" y2="120"/>
<line x1="59.5" y1="117" x2="59.5" y2="120"/>
<line x1="64.5" y1="117" x2="64.5" y2="120"/>
<line x1="68.5" y1="117" x2="68.5" y2="120"/>
<line x1="72.5" y1="105" x2="72.5" y2="120"/>
<line x1="76.5" y1="117" x2="76.5" y2="120"/>
<line x1="81.5" y1="117" x2="81.5" y2="120"/>
<line x1="85.5" y1="117" x2="85.5" y2="120"/>
<line x1="89.5" y1="117" x2="89.5" y2="120"/>
<line x1="93.5" y1="114" x2="93.5" y2="120"/>
<line x1="98.5" y1="117" x2="98.5" y2="120"/>
<line x1="102.5" y1="117" x2="102.5" y2="120"/>
<line x1="106.5" y1="117" x2="106.5" y2="120"/>
<line x1="110.5" y1="117" x2="110.5" y2="120"/>
<line x1="115.5" y1="105" x2="115.5" y2="120"/>
<line x1="119.5" y1="117" x2="119.5" y2="120"/>
<line x1="123.5" y1="117" x2="123.5" y2="120"/>
<line x1="127.5" y1="117" x2="127.5" y2="120"/>
<line x1="132.5" y1="117" x2="132.5" y2="120"/>
<line x1="136.5" y1="114" x2="136.5" y2="120"/>
<line x1="140.5" y1="117" x2="140.5" y2="120"/>
<line x1="144.5" y1="117" x2="144.5" y2="120"/>
<line x1="149.5" y1="117" x2="149.5" y2="120"/>
<line x1="153.5" y1="117" x2="153.5" y2="120"/>
<line x1="157.5" y1="105" x2="157.5" y2="120"/>
<line x1="161.5" y1="117" x2="161.5" y2="120"/>
<line x1="166.5" y1="117" x2="166.5" y2="120"/>
<line x1="170.5" y1="117" x2="170.5" y2="120"/>
<line x1="174.5" y1="117" x2="174.5" y2="120"/>
<line x1="178.5" y1="114" x2="178.5" y2="120"/>
<line x1="183.5" y1="117" x2="183.5" y2="120"/>
<line x1="187.5" y1="117" x2="187.5" y2="120"/>
<line x1="191.5" y1="117" x2="191.5" y2="120"/>
<line x1="195.5" y1="117" x2="195.5" y2="120"/>
<line x1="200.5" y1="105" x2="200.5" y2="120"/>
<line x1="204.5" y1="117" x2="204.5" y2="120"/>
<line x1="208.5" y1="117" x2="208.5" y2="120"/>
<line x1="212.5" y1="117" x2="212.5" y2="120"/>
<line x1="217.5" y1="117" x2="217.5" y2="120"/>
<line x1="221.5" y1="114" x2="221.5" y2="120"/>
<line x1="225.5" y1="117" x2="225.5" y2="120"/>
<line x1="229.5" y1="117" x2="229.5" y2="120"/>
<line x1="234.5" y1="117" x2="234.5" y2="120"/>
<line x1="238.5" y1="117" x2="238.5" y2="120"/>
<line x1="242.5" y1="105" x2="242.5" y2="120"/>
<line x1="246.5" y1="117" x2="246.5" y2="120"/>
<line x1="251.5" y1="117" x2="251.5" y2="120"/>
<line x1="255.5" y1="117" x2="255.5" y2="120"/>
<line x1="259.5" y1="117" x2="259.5" y2="120"/>
<line x1="263.5" y1="114" x2="263.5" y2="120"/>
<line x1="268.5" y1="117" x2="268.5" y2="120"/>
<line x1="272.5" y1="117" x2="272.5" y2="120"/>
<line x1="276.5" y1="117" x2="276.5" y2="120"/>
<line x1="280.5" y1="117" x2="280.5" y2="120"/>
<line x1="285.5" y1="105" x2="285.5" y2="120"/>
<line x1="289.5" y1="117" x2="289.5" y2="120"/>
<line x1="293.5" y1="117" x2="293.5" y2="120"/>
<line x1="297.5" y1="117" x2="297.5" y2="120"/>
<line x1="302.5" y1="117" x2="302.5" y2="120"/>
<line x1="306.5" y1="114" x2="306.5" y2="120"/>
<line x1="310.5" y1="117" x2="310.5" y2="120"/>
<line x1="314.5" y1="117" x2="314.5" y2="120"/>
<line x1="319.5" y1="117" x2="319.5" y2="120"/>
<line x1="323.5" y1="117" x2="323.5" y2="120"/>
<line x1="327.5" y1="105" x2="327.5" y2="120"/>
<line x1="331.5" y1="117" x2="331.5" y2="120"/>
<line x1="336.5" y1="117" x2="336.5" y2="120"/>
<line x1="340.5" y1="117" x2="340.5" y2="120"/>
<line x1="344.5" y1="117" x2="344.5" y2="120"/>
<line x1="348.5" y1="114" x2="348.5" y2="120"/>
<line x1="353.5" y1="117" x2="353.5" y2="120"/>
<line x1="357.5" y1="117" x2="357.5" y2="120"/>
<line x1="361.5" y1="117" x2="361.5" y2="120"/>
<line x1="365.5" y1="117" x2="365.5" y2="120"/>
<line x1="370.5" y1="105" x2="370.5" y2="120"/>
<line x1="374.5" y1="117" x2="374.5" y2="120"/>
<line x1="378.5" y1="117" x2="378.5" y2="120"/>
<line x1="382.5" y1="117" x2="382.5" y2="120"/>
<line x1="387.5" y1="117" x2="387.5" y2="120"/>
<line x1="391.5" y1="114" x2="391.5" y2="120"/>
<line x1="395.5" y1="117" x2="395.5" y2="120"/>
<line x1="399.5" y1="117" x2="399.5" y2="120"/>
<line x1="404.5" y1="117" x2="404.5" y2="120"/>
<line x1="408.5" y1="117" x2="408.5" y2="120"/>
<line x1="412.5" y1="105" x2="412.5" y2="120"/>
<line x1="416.5" y1="117" x2="416.5" y2="120"/>
<line x1="421.5" y1="117" x2="421.5" y2="120"/>
<line x1="425.5" y1="117" x2="425.5" y2="120"/>
<line x1="429.5" y1="117" x2="429.5" y2="120"/>
<line x1="433.5" y1="114" x2="433.5" y2="120"/>
<line x1="438.5" y1="117" x2="438.5" y2="120"/>
<line x1="442.5" y1="117" x2="442.5" y2="120"/>
<line x1="446.5" y1="117" x2="446.5" y2="120"/>
<line x1="450.5" y1="117" x2="450.5" y2="120"/>
<line x1="455.5" y1="105" x2="455.5" y2="120"/>
<line x1="459.5" y1="117" x2="459.5" y2="120"/>
<line x1="463.5" y1="117" x2="463.5" y2="120"/>
<line x1="467.5" y1="117" x2="467.5" y2="120"/>
<line x1="472.5" y1="117" x2="472.5" y2="120"/>
<line x1="476.5" y1="114" x2="476.5" y2="120"/>
<line x1="480.5" y1="117" x2="480.5" y2="120"/>
<line x1="484.5" y1="117" x2="484.5" y2="120"/>
<line x1="489.5" y1="117" x2="489.5" y2="120"/>
<line x1="493.5" y1="117" x2="493.5" y2="120"/>
<line x1="497.5" y1="105" x2="497.5" y2="120"/>
<line x1="501.5" y1="117" x2="501.5" y2="120"/>
<line x1="506.5" y1="117" x2="506.5" y2="120"/>
<line x1="510.5" y1="117" x2="510.5" y2="120"/>
<line x1="514.5" y1="117" x2="514.5" y2="120"/>
<line x1="518.5" y1="114" x2="518.5" y2="120"/>
<line x1="523.5" y1="117" x2="523.5" y2="120"/>
<line x1="527.5" y1="117" x2="527.5" y2="120"/>
<line x1="531.5" y1="117" x2="531.5" y2="120"/>
<line x1="535.5" y1="117" x2="535.5" y2="120"/>
<line x1="540.5" y1="105" x2="540.5" y2="120"/>
<line x1="544.5" y1="117" x2="544.5" y2="120"/>
<line x1="548.5" y1="117" x2="548.5" y2="120"/>
<line x1="552.5" y1="117" x2="552.5" y2="120"/>
<line x1="557.5" y1="117" x2="557.5" y2="120"/>
<line x1="561.5" y1="114" x2="561.5" y2="120"/>
<line x1="565.5" y1="117" x2="565.5" y2="120"/>
<line x1="569.5" y1="117" x2="569.5" y2="120"/>
<line x1="574.5" y1="117" x2="574.5" y2="120"/>
<line x1="578.5" y1="117" x2="578.5" y2="120"/>
<line x1="582.5" y1="105" x2="582.5" y2="120"/>
<line x1="586.5" y1="117" x2="586.5" y2="120"/>
<line x1="591.5" y1="117" x2="591.5" y2="120"/>
<line x1="595.5" y1="117" x2="595.5" y2="120"/>
<line x1="599.5" y1="117" x2="599.5" y2="120"/>
<line x1="603.5" y1="114" x2="603.5" y2="120"/>
<line x1="608.5" y1="117" x2="608.5" y2="120"/>
<line x1="612.5" y1="117" x2="612.5" y2="120"/>
<line x1="616.5" y1="117" x2="616.5" y2="120"/>
<line x1="620.5" y1="117" x2="620.5" y2="120"/>
<line x1="625.5" y1="105" x2="625.5" y2="120"/>
<line x1="629.5" y1="117" x2="629.5" y2="120"/>
<line x1="633.5" y1="117" x2="633.5" y2="120"/>
<line x1="637.5" y1="117" x2="637.5" y2="120"/>
<line x1="642.5" y1="117" x2="642.5" y2="120"/>
<line x1="646.5" y1="114" x2="646.5" y2="120"/>
<line x1="650.5" y1="117" x2="650.5" y2="120"/>
<line x1="654.5" y1="117" x2="654.5" y2="120"/>
<line x1="659.5" y1="117" x2="659.5" y2="120"/>
<line x1="663.5" y1="117" x2="663.5" y2="120"/>
<line x1="667.5" y1="105" x2="667.5" y2="120"/>
<line x1="671.5" y1="117" x2="671.5" y2="120"/>
<line x1="676.5" y1="117" x2="676.5" y2="120"/>
<line x1="680.5" y1="117" x2="680.5" y2="120"/>
<line x1="684.5" y1="117" x2="684.5" y2="120"/>
<line x1="688.5" y1="114" x2="688.5" y2="120"/>
<line x1="693.5" y1="117" x2="693.5" y2="120"/>
<line x1="697.5" y1="117" x2="697.5" y2="120"/>
<line x1="701.5" y1="117" x2="701.5" y2="120"/>
<line x1="705.5" y1="117" x2="705.5" y2="120"/>
<line x1="710.5" y1="105" x2="710.5" y2="120"/>
<line x1="714.5" y1="117" x2="714.5" y2="120"/>
<line x1="718.5" y1="117" x2="718.5" y2="120"/>
<line x1="722.5" y1="117" x2="722.5" y2="120"/>
<line x1="727.5" y1="117" x2="727.5" y2="120"/>
<line x1="731.5" y1="114" x2="731.5" y2="120"/>
<line x1="735.5" y1="117" x2="735.5" y2="120"/>
<line x1="739.5" y1="117" x2="739.5" y2="120"/>
<line x1="744.5" y1="117" x2="744.5" y2="120"/>
<line x1="748.5" y1="117" x2="748.5" y2="120"/>
<line x1="752.5" y1="105" x2="752.5" y2="120"/>
<line x1="756.5" y1="117" x2="756.5" y2="120"/>
<line x1="761.5" y1="117" x2="761.5" y2="120"/>
<line x1="765.5" y1="117" x2="765.5" y2="120"/>
<line x1="769.5" y1="117" x2="769.5" y2="120"/>
<line x1="773.5" y1="114" x2="773.5" y2="120"/>
<line x1="778.5" y1="117" x2="778.5" y2="120"/>
<line x1="782.5" y1="117" x2="782.5" y2="120"/>
<line x1="786.5" y1="117" x2="786.5" y2="120"/>
<line x1="790.5" y1="117" x2="790.5" y2="120"/>
<line x1="795.5" y1="105" x2="795.5" y2="120"/>
<line x1="799.5" y1="117" x2="799.5" y2="120"/>
<line x1="803.5" y1="117" x2="803.5" y2="120"/>
<line x1="807.5" y1="117" x2="807.5" y2="120"/>
<line x1="812.5" y1="117" x2="812.5" y2="120"/>
<line x1="816.5" y1="114" x2="816.5" y2="120"/>
<line x1="820.5" y1="117" x2="820.5" y2="120"/>
<line x1="824.5" y1="117" x2="824.5" y2="120"/>
<line x1="829.5" y1="117" x2="829.5" y2="120"/>
<line x1="833.5" y1="117" x2="833.5" y2="120"/>
<line x1="837.5" y1="105" x2="837.5" y2="120"/>
<line x1="842.5" y1="117" x2="842.5" y2="120"/>
<line x1="846.5" y1="117" x2="846.5" y2="120"/>
<line x1="850.5" y1="117" x2="850.5" y2="120"/>
<line x1="854.5" y1="117" x2="854.5" y2="120"/>
<line x1="859.5" y1="114" x2="859.5" y2="120"/>
<line x1="863.5" y1="117" x2="863.5" y2="120"/>
<line x1="867.5" y1="117" x2="867.5" y2="120"/>
<line x1="871.5" y1="117" x2="871.5" y2="120"/>
<line x1="876.5" y1="117" x2="876.5" y2="120"/>
<line x1="880.5" y1="105" x2="880.5" y2="120"/>
<line x1="884.5" y1="117" x2="884.5" y2="120"/>
<line x1="888.5" y1="117" x2="888.5" y2="120"/>
<line x1="893.5" y1="117" x2="893.5" y2="120"/>
<line x1="897.5" y1="117" x2="897.5" y2="120"/>
<line x1="901.5" y1="114" x2="901.5" y2="120"/>
<line x1="905.5" y1="117" x2="905.5" y2="120"/>
<line x1="910.5" y1="117" x2="910.5" y2="120"/>
<line x1="914.5" y1="117" x2="914.5" y2="120"/>
<line x1="918.5" y1="117" x2="918.5" y2="120"/>
<line x1="922.5" y1="105" x2="922.5" y2="120"/>
<line x1="927.5" y1="117" x2="927.5" y2="120"/>
<line x1="931.5" y1="117" x2="931.5" y2="120"/>
<line x1="935.5" y1="117" x2="935.5" y2="120"/>
<line x1="939.5" y1="117" x2="939.5" y2="120"/>
<line x1="944.5" y1="114" x2="944.5" y2="120"/>
<line x1="948.5" y1="117" x2="948.5" y2="120"/>
<line x1="952.5" y1="117" x2="952.5" y2="120"/>
<line x1="956.5" y1="117" x2="956.5" y2="120"/>
<line x1="961.5" y1="117" x2="961.5" y2="120"/>
<line x1="965.5" y1="105" x2="965.5" y2="120"/>
<line x1="969.5" y1="117" x2="969.5" y2="120"/>
<line x1="973.5" y1="117" x2="973.5" y2="120"/>
<line x1="978.5" y1="117" x2="978.5" y2="120"/>
<line x1="982.5" y1="117" x2="982.5" y2="120"/>
<line x1="986.5" y1="114" x2="986.5" y2="120"/>
<line x1="990.5" y1="117" x2="990.5" y2="120"/>
<line x1="995.5" y1="117" x2="995.5" y2="120"/>
<line x1="999.5" y1="117" x2="999.5" y2="120"/>
<line x1="1003.5" y1="117" x2="1003.5" y2="120"/>
<line x1="1007.5" y1="105" x2="1007.5" y2="120"/>
<line x1="1012.5" y1="117" x2="1012.5" y2="120"/>
<line x1="1016.5" y1="117" x2="1016.5" y2="120"/>
<line x1="1020.5" y1="117" x2="1020.5" y2="120"/>
<line x1="1024.5" y1="117" x2="1024.5" y2="120"/>
<line x1="1029.5" y1="114" x2="1029.5" y2="120"/>
<line x1="1033.5" y1="117" x2="1033.5" y2="120"/>
<line x1="1037.5" y1="117" x2="1037.5" y2="120"/>
<line x1="1041.5" y1="117" x2="1041.5" y2="120"/>
<line x1="1046.5" y1="117" x2="1046.5" y2="120"/>
<line x1="1050.5" y1="105" x2="1050.5" y2="120"/>
<line x1="1054.5" y1="117" x2="1054.5" y2="120"/>
<line x1="1058.5" y1="117" x2="1058.5" y2="120"/>
<line x1="1063.5" y1="117" x2="1063.5" y2="120"/>
<line x1="1067.5" y1="117" x2="1067.5" y2="120"/>
<line x1="1071.5" y1="114" x2="1071.5" y2="120"/>
<line x1="1075.5" y1="117" x2="1075.5" y2="120"/>
<line x1="1080.5" y1="117" x2="1080.5" y2="120"/>
<line x1="1084.5" y1="117" x2="1084.5" y2="120"/>
<line x1="1088.5" y1="117" x2="1088.5" y2="120"/>
<line x1="1092.5" y1="105" x2="1092.5" y2="120"/>
<line x1="1097.5" y1="117" x2="1097.5" y2="120"/>
<line x1="1101.5" y1="117" x2="1101.5" y2="120"/>
<line x1="1105.5" y1="117" x2="1105.5" y2="120"/>
<line x1="1109.5" y1="117" x2="1109.5" y2="120"/>
<line x1="1114.5" y1="114" x2="1114.5" y2="120"/>
<line x1="1118.5" y1="117" x2="1118.5" y2="120"/>
<line x1="1122.5" y1="117" x2="1122.5" y2="120"/>
<line x1="1126.5" y1="117" x2="1126.5" y2="120"/>
<line x1="1131.5" y1="117" x2="1131.5" y2="120"/>
<line x1="1135.5" y1="105" x2="1135.5" y2="120"/>
<line x1="1139.5" y1="117" x2="1139.5" y2="120"/>
<line x1="1143.5" y1="117" x2="1143.5" y2="120"/>
<line x1="1148.5" y1="117" x2="1148.5" y2="120"/>
<line x1="1152.5" y1="117" x2="1152.5" y2="120"/>
<line x1="1156.5" y1="114" x2="1156.5" y2="120"/>
<line x1="1160.5" y1="117" x2="1160.5" y2="120"/>
<line x1="1165.5" y1="117" x2="1165.5" y2="120"/>
<line x1="1169.5" y1="117" x2="1169.5" y2="120"/>
<line x1="1173.5" y1="117" x2="1173.5" y2="120"/>
<line x1="1177.5" y1="105" x2="1177.5" y2="120"/>
<line x1="1182.5" y1="117" x2="1182.5" y2="120"/>
<line x1="1186.5" y1="117" x2="1186.5" y2="120"/>
<line x1="1190.5" y1="117" x2="1190.5" y2="120"/>
<line x1="1194.5" y1="117" x2="1194.5" y2="120"/>
<line x1="1199.5" y1="114" x2="1199.5" y2="120"/>
<line x1="1203.5" y1="117" x2="1203.5" y2="120"/>
<line x1="1207.5" y1="117" x2="1207.5" y2="120"/>
<line x1="1211.5" y1="117" x2="1211.5" y2="120"/>
<line x1="1216.5" y1="117" x2="1216.5" y2="120"/>
<line x1="1220.5" y1="105" x2="1220.5" y2="120"/>
<line x1="1224.5" y1="117" x2="1224.5" y2="120"/>
<line x1="1228.5" y1="117" x2="1228.5" y2="120"/>
<line x1="1233.5" y1="117" x2="1233.5" y2="120"/>
<line x1="1237.5" y1="117" x2="1237.5" y2="120"/>
<line x1="1241.5" y1="114" x2="1241.5" y2="120"/>
<line x1="1245.5" y1="117" x2="1245.5" y2="120"/>
<line x1="1250.5" y1="117" x2="1250.5" y2="120"/>
<line x1="1254.5" y1="117" x2="1254.5" y2="120"/>
<line x1="1258.5" y1="117" x2="1258.5" y2="120"/>
<line x1="1262.5" y1="105" x2="1262.5" y2="120"/>
<line x1="1267.5" y1="117" x2="1267.5" y2="120"/>
<line x1="1271.5" y1="117" x2="1271.5" y2="120"/>
<line x1="1275.5" y1="117" x2="1275.5" y2="120"/>
<line x1="1279.5" y1="117" x2="1279.5" y2="120"/>
<line x1="1284.5" y1="114" x2="1284.5" y2="120"/>
<line x1="1288.5" y1="117" x2="1288.5" y2="120"/>
<line x1="1292.5" y1="117" x2="1292.5" y2="120"/>
<line x1="1296.5" y1="117" x2="1296.5" y2="120"/>
<line x1="1301.5" y1="117" x2="1301.5" y2="120"/>
<line x1="1305.5" y1="105" x2="1305.5" y2="120"/>
<line x1="1309.5" y1="117" x2="1309.5" y2="120"/>
<line x1="1313.5" y1="117" x2="1313.5" y2="120"/>
<line x1="1318.5" y1="117" x2="1318.5" y2="120"/>
<line x1="1322.5" y1="117" x2="1322.5" y2="120"/>
<line x1="1326.5" y1="114" x2="1326.5" y2="120"/>
<line x1="1330.5" y1="117" x2="1330.5" y2="120"/>
<line x1="1335.5" y1="117" x2="1335.5" y2="120"/>
<line x1="1339.5" y1="117" x2="1339.5" y2="120"/>
<line x1="1343.5" y1="117" x2="1343.5" y2="120"/>
<line x1="1347.5" y1="105" x2="1347.5" y2="120"/>
<line x1="1352.5" y1="117" x2="1352.5" y2="120"/>
<line x1="1356.5" y1="117" x2="1356.5" y2="120"/>
<line x1="1360.5" y1="117" x2="1360.5" y2="120"/>
<line x1="1364.5" y1="117" x2="1364.5" y2="120"/>
<line x1="1369.5" y1="114" x2="1369.5" y2="120"/>
<line x1="1373.5" y1="117" x2="1373.5" y2="120"/>
<line x1="1377.5" y1="117" x2="1377.5" y2="120"/>
<line x1="1381.5" y1="117" x2="1381.5" y2="120"/>
<line x1="1386.5" y1="117" x2="1386.5" y2="120"/>
<line x1="1390.5" y1="105" x2="1390.5" y2="120"/>
<line x1="1394.5" y1="117" x2="1394.5" y2="120"/>
<line x1="1398.5" y1="117" x2="1398.5" y2="120"/>
<line x1="1403.5" y1="117" x2="1403.5" y2="120"/>
<line x1="1407.5" y1="117" x2="1407.5" y2="120"/>
<line x1="1411.5" y1="114" x2="1411.5" y2="120"/>
<line x1="1415.5" y1="117" x2="1415.5" y2="120"/>
<line x1="1420.5" y1="117" x2="1420.5" y2="120"/>
<line x1="1424.5" y1="117" x2="1424.5" y2="120"/>
<line x1="1428.5" y1="117" x2="1428.5" y2="120"/>
<line x1="1432.5" y1="105" x2="1432.5" y2="120"/>
<line x1="1437.5" y1="117" x2="1437.5" y2="120"/>
<line x1="1441.5" y1="117" x2="1441.5" y2="120"/>
<line x1="1445.5" y1="117" x2="1445.5" y2="120"/>
<line x1="1449.5" y1="117" x2="1449.5" y2="120"/>
<line x1="1454.5" y1="114" x2="1454.5" y2="120"/>
<line x1="1458.5" y1="117" x2="1458.5" y2="120"/>
<line x1="1462.5" y1="117" x2="1462.5" y2="120"/>
<line x1="1466.5" y1="117" x2="1466.5" y2="120"/>
<line x1="1471.5" y1="117" x2="1471.5" y2="120"/>
<line x1="1475.5" y1="105" x2="1475.5" y2="120"/>
<line x1="1479.5" y1="117" x2="1479.5" y2="120"/>
<line x1="1483.5" y1="117" x2="1483.5" y2="120"/>
<line x1="1488.5" y1="117" x2="1488.5" y2="120"/>
<line x1="1492.5" y1="117" x2="1492.5" y2="120"/>
<line x1="1496.5" y1="114" x2="1496.5" y2="120"/>
<line x1="1500.5" y1="117" x2="1500.5" y2="120"/>
<line x1="1505.5" y1="117" x2="1505.5" y2="120"/>
<line x1="1509.5" y1="117" x2="1509.5" y2="120"/>
<line x1="1513.5" y1="117" x2="1513.5" y2="120"/>
<line x1="1517.5" y1="105" x2="1517.5" y2="120"/>
<line x1="1522.5" y1="117" x2="1522.5" y2="120"/>
<line x1="1526.5" y1="117" x2="1526.5" y2="120"/>
<line x1="1530.5" y1="117" x2="1530.5" y2="120"/>
<line x1="1534.5" y1="117" x2="1534.5" y2="120"/>
<line x1="1539.5" y1="114" x2="1539.5" y2="120"/>
<line x1="1543.5" y1="117" x2="1543.5" y2="120"/>
<line x1="1547.5" y1="117" x2="1547.5" y2="120"/>
<line x1="1551.5" y1="117" x2="1551.5" y2="120"/>
<line x1="1556.5" y1="117" x2="1556.5" y2="120"/>
<line x1="1560.5" y1="105" x2="1560.5" y2="120"/>
<line x1="1564.5" y1="117" x2="1564.5" y2="120"/>
<line x1="1568.5" y1="117" x2="1568.5" y2="120"/>
<line x1="1573.5" y1="117" x2="1573.5" y2="120"/>
<line x1="1577.5" y1="117" x2="1577.5" y2="120"/>
<line x1="1581.5" y1="114" x2="1581.5" y2="120"/>
<line x1="1585.5" y1="117" x2="1585.5" y2="120"/>
<line x1="1590.5" y1="117" x2="1590.5" y2="120"/>
<line x1="1594.5" y1="117" x2="1594.5" y2="120"/>
<line x1="1598.5" y1="117" x2="1598.5" y2="120"/>
<line x1="1602.5" y1="105" x2="1602.5" y2="120"/>
<line x1="1607.5" y1="117" x2="1607.5" y2="120"/>
<line x1="1611.5" y1="117" x2="1611.5" y2="120"/>
<line x1="1615.5" y1="117" x2="1615.5" y2="120"/>
<line x1="1619.5" y1="117" x2="1619.5" y2="120"/>
<line x1="1624.5" y1="114" x2="1624.5" y2="120"/>
<line x1="1628.5" y1="117" x2="1628.5" y2="120"/>
<line x1="1632.5" y1="117" x2="1632.5" y2="120"/>
<line x1="1636.5" y1="117" x2="1636.5" y2="120"/>
<line x1="1641.5" y1="117" x2="1641.5" y2="120"/>
<line x1="1645.5" y1="105" x2="1645.5" y2="120"/>
<line x1="1649.5" y1="117" x2="1649.5" y2="120"/>
<line x1="1653.5" y1="117" x2="1653.5" y2="120"/>
<line x1="1658.5" y1="117" x2="1658.5" y2="120"/>
<line x1="1662.5" y1="117" x2="1662.5" y2="120"/>
<line x1="1666.5" y1="114" x2="1666.5" y2="120"/>
<line x1="1670.5" y1="117" x2="1670.5" y2="120"/>
<line x1="1675.5" y1="117" x2="1675.5" y2="120"/>
<line x1="1679.5" y1="117" x2="1679.5" y2="120"/>
<line x1="1683.5" y1="117" x2="1683.5" y2="120"/>
<line x1="1687.5" y1="105" x2="1687.5" y2="120"/>
<line x1="1692.5" y1="117" x2="1692.5" y2="120"/>
<line x1="1696.5" y1="117" x2="1696.5" y2="120"/>
<line x1="1700.5" y1="117" x2="1700.5" y2="120"/>
<line x1="1704.5" y1="117" x2="1704.5" y2="120"/>
<line x1="1709.5" y1="114" x2="1709.5" y2="120"/>
<line x1="1713.5" y1="117" x2="1713.5" y2="120"/>
<line x1="1717.5" y1="117" x2="1717.5" y2="120"/>
<line x1="1721.5" y1="117" x2="1721.5" y2="120"/>
<line x1="1726.5" y1="117" x2="1726.5" y2="120"/>
<line x1="1730.5" y1="105" x2="1730.5" y2="120"/>
<line x1="1734.5" y1="117" x2="1734.5" y2="120"/>
<line x1="1738.5" y1="117" x2="1738.5" y2="120"/>
<line x1="1743.5" y1="117" x2="1743.5" y2="120"/>
<line x1="1747.5" y1="117" x2="1747.5" y2="120"/>
<line x1="1751.5" y1="114" x2="1751.5" y2="120"/>
<line x1="1755.5" y1="117" x2="1755.5" y2="120"/>
<line x1="1760.5" y1="117" x2="1760.5" y2="120"/>
<line x1="1764.5" y1="117" x2="1764.5" y2="120"/>
<line x1="1768.5" y1="117" x2="1768.5" y2="120"/>
<line x1="1772.5" y1="105" x2="1772.5" y2="120"/>
<line x1="1777.5" y1="117" x2="1777.5" y2="120"/>
<line x1="1781.5" y1="117" x2="1781.5" y2="120"/>
<line x1="1785.5" y1="117" x2="1785.5" y2="120"/>
<line x1="1789.5" y1="117" x2="1789.5" y2="120"/>
<line x1="1794.5" y1="114" x2="1794.5" y2="120"/>
<line x1="1798.5" y1="117" x2="1798.5" y2="120"/>
<line x1="1802.5" y1="117" x2="1802.5" y2="120"/>
<line x1="1806.5" y1="117" x2="1806.5" y2="120"/>
<line x1="1811.5" y1="117" x2="1811.5" y2="120"/>
<line x1="1815.5" y1="105" x2="1815.5" y2="120"/>
<line x1="1819.5" y1="117" x2="1819.5" y2="120"/>
<line x1="1823.5" y1="117" x2="1823.5" y2="120"/>
<line x1="1828.5" y1="117" x2="1828.5" y2="120"/>
<line x1="1832.5" y1="117" x2="1832.5" y2="120"/>
<line x1="1836.5" y1="114" x2="1836.5" y2="120"/>
<line x1="1840.5" y1="117" x2="1840.5" y2="120"/>
<line x1="1845.5" y1="117" x2="1845.5" y2="120"/>
<line x1="1849.5" y1="117" x2="1849.5" y2="120"/>
<line x1="1853.5" y1="117" x2="1853.5" y2="120"/>
<line x1="1857.5" y1="105" x2="1857.5" y2="120"/>
<line x1="1862.5" y1="117" x2="1862.5" y2="120"/>
<line x1="53.5" y1="105" x2="53.5" y2="1020"/>
<line x1="37.5" y1="97" x2="37.5" y2="1020"/>
</g><g stroke="#444" stroke-width="1" stroke-dasharray="1,1"><line x1="43.5" y1="106" x2="43.5" y2="120"/><line x1="42" y1="110.5" x2="53" y2="110.5"/></g><g stroke="#111">
<line x1="50" y1="123.5" x2="53" y2="123.5"/>
<line x1="50" y1="127.5" x2="53" y2="127.5"/>
<line x1="47" y1="131.5" x2="53" y2="131.5"/>
<line x1="50" y1="135.5" x2="53" y2="135.5"/>
<line x1="50" y1="140.5" x2="53" y2="140.5"/>
<line x1="50" y1="144.5" x2="53" y2="144.5"/>
<line x1="50" y1="148.5" x2="53" y2="148.5"/>
<line x1="38" y1="152.5" x2="53" y2="152.5" stroke="#111"/>
<line x1="50" y1="157.5" x2="53" y2="157.5"/>
<line x1="50" y1="161.5" x2="53" y2="161.5"/>
<line x1="50" y1="165.5" x2="53" y2="165.5"/>
<line x1="50" y1="169.5" x2="53" y2="169.5"/>
<line x1="47" y1="174.5" x2="53" y2="174.5"/>
<line x1="50" y1="178.5" x2="53" y2="178.5"/>
<line x1="50" y1="182.5" x2="53" y2="182.5"/>
<line x1="50" y1="186.5" x2="53" y2="186.5"/>
<line x1="50" y1="191.5" x2="53" y2="191.5"/>
<line x1="38" y1="195.5" x2="53" y2="195.5" stroke="#111"/>
<line x1="50" y1="199.5" x2="53" y2="199.5"/>
<line x1="50" y1="203.5" x2="53" y2="203.5"/>
<line x1="50" y1="208.5" x2="53" y2="208.5"/>
<line x1="50" y1="212.5" x2="53" y2="212.5"/>
<line x1="47" y1="216.5" x2="53" y2="216.5"/>
<line x1="50" y1="220.5" x2="53" y2="220.5"/>
<line x1="50" y1="225.5" x2="53" y2="225.5"/>
<line x1="50" y1="229.5" x2="53" y2="229.5"/>
<line x1="50" y1="233.5" x2="53" y2="233.5"/>
<line x1="38" y1="237.5" x2="53" y2="237.5" stroke="#111"/>
<line x1="50" y1="242.5" x2="53" y2="242.5"/>
<line x1="50" y1="246.5" x2="53" y2="246.5"/>
<line x1="50" y1="250.5" x2="53" y2="250.5"/>
<line x1="50" y1="254.5" x2="53" y2="254.5"/>
<line x1="47" y1="259.5" x2="53" y2="259.5"/>
<line x1="50" y1="263.5" x2="53" y2="263.5"/>
<line x1="50" y1="267.5" x2="53" y2="267.5"/>
<line x1="50" y1="271.5" x2="53" y2="271.5"/>
<line x1="50" y1="276.5" x2="53" y2="276.5"/>
<line x1="38" y1="280.5" x2="53" y2="280.5" stroke="#111"/>
<line x1="50" y1="284.5" x2="53" y2="284.5"/>
<line x1="50" y1="288.5" x2="53" y2="288.5"/>
<line x1="50" y1="293.5" x2="53" y2="293.5"/>
<line x1="50" y1="297.5" x2="53" y2="297.5"/>
<line x1="47" y1="301.5" x2="53" y2="301.5"/>
<line x1="50" y1="305.5" x2="53" y2="305.5"/>
<line x1="50" y1="310.5" x2="53" y2="310.5"/>
<line x1="50" y1="314.5" x2="53" y2="314.5"/>
<line x1="50" y1="318.5" x2="53" y2="318.5"/>
<line x1="38" y1="322.5" x2="53" y2="322.5" stroke="#111"/>
<line x1="50" y1="327.5" x2="53" y2="327.5"/>
<line x1="50" y1="331.5" x2="53" y2="331.5"/>
<line x1="50" y1="335.5" x2="53" y2="335.5"/>
<line x1="50" y1="339.5" x2="53" y2="339.5"/>
<line x1="47" y1="344.5" x2="53" y2="344.5"/>
<line x1="50" y1="348.5" x2="53" y2="348.5"/>
<line x1="50" y1="352.5" x2="53" y2="352.5"/>
<line x1="50" y1="356.5" x2="53" y2="356.5"/>
<line x1="50" y1="361.5" x2="53" y2="361.5"/>
<line x1="38" y1="365.5" x2="53" y2="365.5" stroke="#111"/>
<line x1="50" y1="369.5" x2="53" y2="369.5"/>
<line x1="50" y1="373.5" x2="53" y2="373.5"/>
<line x1="50" y1="378.5" x2="53" y2="378.5"/>
<line x1="50" y1="382.5" x2="53" y2="382.5"/>
<line x1="47" y1="386.5" x2="53" y2="386.5"/>
<line x1="50" y1="390.5" x2="53" y2="390.5"/>
<line x1="50" y1="395.5" x2="53" y2="395.5"/>
<line x1="50" y1="399.5" x2="53" y2="399.5"/>
<line x1="50" y1="403.5" x2="53" y2="403.5"/>
<line x1="38" y1="407.5" x2="53" y2="407.5" stroke="#111"/>
<line x1="50" y1="412.5" x2="53" y2="412.5"/>
<line x1="50" y1="416.5" x2="53" y2="416.5"/>
<line x1="50" y1="420.5" x2="53" y2="420.5"/>
<line x1="50" y1="424.5" x2="53" y2="424.5"/>
<line x1="47" y1="429.5" x2="53" y2="429.5"/>
<line x1="50" y1="433.5" x2="53" y2="433.5"/>
<line x1="50" y1="437.5" x2="53" y2="437.5"/>
<line x1="50" y1="441.5" x2="53" y2="441.5"/>
<line x1="50" y1="446.5" x2="53" y2="446.5"/>
<line x1="38" y1="450.5" x2="53" y2="450.5" stroke="#111"/>
<line x1="50" y1="454.5" x2="53" y2="454.5"/>
<line x1="50" y1="458.5" x2="53" y2="458.5"/>
<line x1="50" y1="463.5" x2="53" y2="463.5"/>
<line x1="50" y1="467.5" x2="53" y2="467.5"/>
<line x1="47" y1="471.5" x2="53" y2="471.5"/>
<line x1="50" y1="475.5" x2="53" y2="475.5"/>
<line x1="50" y1="480.5" x2="53" y2="480.5"/>
<line x1="50" y1="484.5" x2="53" y2="484.5"/>
<line x1="50" y1="488.5" x2="53" y2="488.5"/>
<line x1="38" y1="492.5" x2="53" y2="492.5" stroke="#111"/>
<line x1="50" y1="497.5" x2="53" y2="497.5"/>
<line x1="50" y1="501.5" x2="53" y2="501.5"/>
<line x1="50" y1="505.5" x2="53" y2="505.5"/>
<line x1="50" y1="509.5" x2="53" y2="509.5"/>
<line x1="47" y1="514.5" x2="53" y2="514.5"/>
<line x1="50" y1="518.5" x2="53" y2="518.5"/>
<line x1="50" y1="522.5" x2="53" y2="522.5"/>
<line x1="50" y1="555.5" x2="53" y2="555.5"/>
<line x1="50" y1="559.5" x2="53" y2="559.5"/>
<line x1="50" y1="564.5" x2="53" y2="564.5"/>
<line x1="38" y1="568.5" x2="53" y2="568.5" stroke="#111"/>
<line x1="50" y1="572.5" x2="53" y2="572.5"/>
<line x1="50" y1="576.5" x2="53" y2="576.5"/>
<line x1="50" y1="581.5" x2="53" y2="581.5"/>
<line x1="50" y1="585.5" x2="53" y2="585.5"/>
<line x1="47" y1="589.5" x2="53" y2="589.5"/>
<line x1="50" y1="593.5" x2="53" y2="593.5"/>
<line x1="50" y1="598.5" x2="53" y2="598.5"/>
<line x1="50" y1="602.5" x2="53" y2="602.5"/>
<line x1="50" y1="606.5" x2="53" y2="606.5"/>
<line x1="38" y1="610.5" x2="53" y2="610.5" stroke="#111"/>
<line x1="50" y1="615.5" x2="53" y2="615.5"/>
<line x1="50" y1="619.5" x2="53" y2="619.5"/>
<line x1="50" y1="623.5" x2="53" y2="623.5"/>
<line x1="50" y1="627.5" x2="53" y2="627.5"/>
<line x1="47" y1="632.5" x2="53" y2="632.5"/>
<line x1="50" y1="636.5" x2="53" y2="636.5"/>
<line x1="50" y1="640.5" x2="53" y2="640.5"/>
<line x1="50" y1="644.5" x2="53" y2="644.5"/>
<line x1="50" y1="649.5" x2="53" y2="649.5"/>
<line x1="38" y1="653.5" x2="53" y2="653.5" stroke="#111"/>
<line x1="50" y1="657.5" x2="53" y2="657.5"/>
<line x1="50" y1="661.5" x2="53" y2="661.5"/>
<line x1="50" y1="666.5" x2="53" y2="666.5"/>
<line x1="50" y1="670.5" x2="53" y2="670.5"/>
<line x1="47" y1="674.5" x2="53" y2="674.5"/>
<line x1="50" y1="678.5" x2="53" y2="678.5"/>
<line x1="50" y1="683.5" x2="53" y2="683.5"/>
<line x1="50" y1="687.5" x2="53" y2="687.5"/>
<line x1="50" y1="691.5" x2="53" y2="691.5"/>
<line x1="38" y1="695.5" x2="53" y2="695.5" stroke="#111"/>
<line x1="50" y1="700.5" x2="53" y2="700.5"/>
<line x1="50" y1="704.5" x2="53" y2="704.5"/>
<line x1="50" y1="708.5" x2="53" y2="708.5"/>
<line x1="50" y1="712.5" x2="53" y2="712.5"/>
<line x1="47" y1="717.5" x2="53" y2="717.5"/>
<line x1="50" y1="721.5" x2="53" y2="721.5"/>
<line x1="50" y1="725.5" x2="53" y2="725.5"/>
<line x1="50" y1="729.5" x2="53" y2="729.5"/>
<line x1="50" y1="734.5" x2="53" y2="734.5"/>
<line x1="38" y1="738.5" x2="53" y2="738.5" stroke="#111"/>
<line x1="50" y1="742.5" x2="53" y2="742.5"/>
<line x1="50" y1="746.5" x2="53" y2="746.5"/>
<line x1="50" y1="751.5" x2="53" y2="751.5"/>
<line x1="50" y1="755.5" x2="53" y2="755.5"/>
<line x1="47" y1="759.5" x2="53" y2="759.5"/>
<line x1="50" y1="763.5" x2="53" y2="763.5"/>
<line x1="50" y1="768.5" x2="53" y2="768.5"/>
<line x1="50" y1="772.5" x2="53" y2="772.5"/>
<line x1="50" y1="776.5" x2="53" y2="776.5"/>
<line x1="38" y1="780.5" x2="53" y2="780.5" stroke="#111"/>
<line x1="50" y1="785.5" x2="53" y2="785.5"/>
<line x1="50" y1="789.5" x2="53" y2="789.5"/>
<line x1="50" y1="793.5" x2="53" y2="793.5"/>
<line x1="50" y1="797.5" x2="53" y2="797.5"/>
<line x1="47" y1="802.5" x2="53" y2="802.5"/>
<line x1="50" y1="806.5" x2="53" y2="806.5"/>
<line x1="50" y1="810.5" x2="53" y2="810.5"/>
<line x1="50" y1="814.5" x2="53" y2="814.5"/>
<line x1="50" y1="819.5" x2="53" y2="819.5"/>
<line x1="38" y1="823.5" x2="53" y2="823.5" stroke="#111"/>
<line x1="50" y1="827.5" x2="53" y2="827.5"/>
<line x1="50" y1="831.5" x2="53" y2="831.5"/>
<line x1="50" y1="836.5" x2="53" y2="836.5"/>
<line x1="50" y1="840.5" x2="53" y2="840.5"/>
<line x1="47" y1="844.5" x2="53" y2="844.5"/>
<line x1="50" y1="848.5" x2="53" y2="848.5"/>
<line x1="50" y1="853.5" x2="53" y2="853.5"/>
<line x1="50" y1="857.5" x2="53" y2="857.5"/>
<line x1="50" y1="861.5" x2="53" y2="861.5"/>
<line x1="38" y1="865.5" x2="53" y2="865.5" stroke="#111"/>
<line x1="50" y1="870.5" x2="53" y2="870.5"/>
<line x1="50" y1="874.5" x2="53" y2="874.5"/>
<line x1="50" y1="878.5" x2="53" y2="878.5"/>
<line x1="50" y1="882.5" x2="53" y2="882.5"/>
<line x1="47" y1="887.5" x2="53" y2="887.5"/>
<line x1="50" y1="891.5" x2="53" y2="891.5"/>
<line x1="50" y1="895.5" x2="53" y2="895.5"/>
<line x1="50" y1="899.5" x2="53" y2="899.5"/>
<line x1="50" y1="904.5" x2="53" y2="904.5"/>
<line x1="38" y1="908.5" x2="53" y2="908.5" stroke="#111"/>
<line x1="50" y1="912.5" x2="53" y2="912.5"/>
<line x1="50" y1="916.5" x2="53" y2="916.5"/>
<line x1="50" y1="921.5" x2="53" y2="921.5"/>
<line x1="50" y1="925.5" x2="53" y2="925.5"/>
<line x1="47" y1="929.5" x2="53" y2="929.5"/>
<line x1="50" y1="933.5" x2="53" y2="933.5"/>
<line x1="50" y1="938.5" x2="53" y2="938.5"/>
<line x1="50" y1="942.5" x2="53" y2="942.5"/>
<line x1="50" y1="946.5" x2="53" y2="946.5"/>
<line x1="38" y1="950.5" x2="53" y2="950.5" stroke="#111"/>
<line x1="50" y1="955.5" x2="53" y2="955.5"/>
<line x1="50" y1="959.5" x2="53" y2="959.5"/>
<line x1="50" y1="963.5" x2="53" y2="963.5"/>
<line x1="50" y1="967.5" x2="53" y2="967.5"/>
<line x1="47" y1="972.5" x2="53" y2="972.5"/>
<line x1="50" y1="976.5" x2="53" y2="976.5"/>
<line x1="50" y1="980.5" x2="53" y2="980.5"/>
<line x1="50" y1="984.5" x2="53" y2="984.5"/>
<line x1="50" y1="989.5" x2="53" y2="989.5"/>
<line x1="38" y1="993.5" x2="53" y2="993.5" stroke="#111"/>
<line x1="50" y1="997.5" x2="53" y2="997.5"/>
<line x1="50" y1="1001.5" x2="53" y2="1001.5"/>
<line x1="50" y1="1006.5" x2="53" y2="1006.5"/>
<line x1="50" y1="1010.5" x2="53" y2="1010.5"/>
<line x1="47" y1="1014.5" x2="53" y2="1014.5"/>
<line x1="50" y1="1018.5" x2="53" y2="1018.5"/>
</g></svg>
<div class="t rl" style="left:74px;top:106px">60</div>
<div class="t rl" style="left:117px;top:106px">40</div>
<div class="t rl" style="left:159px;top:106px">20</div>
<div class="t rl" style="left:202px;top:106px">0</div>
<div class="t rl" style="left:244px;top:106px">20</div>
<div class="t rl" style="left:287px;top:106px">40</div>
<div class="t rl" style="left:329px;top:106px">60</div>
<div class="t rl" style="left:372px;top:106px">80</div>
<div class="t rl" style="left:414px;top:106px">100</div>
<div class="t rl" style="left:457px;top:106px">120</div>
<div class="t rl" style="left:499px;top:106px">140</div>
<div class="t rl" style="left:542px;top:106px">160</div>
<div class="t rl" style="left:584px;top:106px">180</div>
<div class="t rl" style="left:627px;top:106px">200</div>
<div class="t rl" style="left:669px;top:106px">220</div>
<div class="t rl" style="left:712px;top:106px">240</div>
<div class="t rl" style="left:754px;top:106px">260</div>
<div class="t rl" style="left:797px;top:106px">280</div>
<div class="t rl" style="left:839px;top:106px">300</div>
<div class="t rl" style="left:882px;top:106px">320</div>
<div class="t rl" style="left:924px;top:106px">340</div>
<div class="t rl" style="left:967px;top:106px">360</div>
<div class="t rl" style="left:1009px;top:106px">380</div>
<div class="t rl" style="left:1052px;top:106px">400</div>
<div class="t rl" style="left:1094px;top:106px">420</div>
<div class="t rl" style="left:1137px;top:106px">440</div>
<div class="t rl" style="left:1179px;top:106px">460</div>
<div class="t rl" style="left:1222px;top:106px">480</div>
<div class="t rl" style="left:1264px;top:106px">500</div>
<div class="t rl" style="left:1307px;top:106px">520</div>
<div class="t rl" style="left:1349px;top:106px">540</div>
<div class="t rl" style="left:1392px;top:106px">560</div>
<div class="t rl" style="left:1434px;top:106px">580</div>
<div class="t rl" style="left:1477px;top:106px">600</div>
<div class="t rl" style="left:1519px;top:106px">620</div>
<div class="t rl" style="left:1562px;top:106px">640</div>
<div class="t rl" style="left:1604px;top:106px">660</div>
<div class="t rl" style="left:1647px;top:106px">680</div>
<div class="t rl" style="left:1689px;top:106px">700</div>
<div class="t rl" style="left:1732px;top:106px">720</div>
<div class="t rl" style="left:1774px;top:106px">740</div>
<div class="t rl" style="left:1817px;top:106px">760</div>
<div class="t rl" style="left:1859px;top:106px">780</div>
<div class="a vl" style="left:40px;top:154px;color:#111"><div>0</div></div>
<div class="a vl" style="left:40px;top:197px;color:#111"><div>2</div><div>0</div></div>
<div class="a vl" style="left:40px;top:239px;color:#111"><div>4</div><div>0</div></div>
<div class="a vl" style="left:40px;top:282px;color:#111"><div>6</div><div>0</div></div>
<div class="a vl" style="left:40px;top:324px;color:#111"><div>8</div><div>0</div></div>
<div class="a vl" style="left:40px;top:367px;color:#111"><div>1</div><div>0</div><div>0</div></div>
<div class="a vl" style="left:40px;top:409px;color:#111"><div>1</div><div>2</div><div>0</div></div>
<div class="a vl" style="left:40px;top:452px;color:#111"><div>1</div><div>4</div><div>0</div></div>
<div class="a vl" style="left:40px;top:494px;color:#111"><div>1</div><div>6</div><div>0</div></div>
<div class="a vl" style="left:40px;top:570px;color:#777"><div>2</div><div>0</div></div>
<div class="a vl" style="left:40px;top:612px;color:#777"><div>0</div></div>
<div class="a vl" style="left:40px;top:655px;color:#777"><div>2</div><div>0</div></div>
<div class="a vl" style="left:40px;top:697px;color:#777"><div>4</div><div>0</div></div>
<div class="a vl" style="left:40px;top:740px;color:#777"><div>6</div><div>0</div></div>
<div class="a vl" style="left:40px;top:782px;color:#777"><div>8</div><div>0</div></div>
<div class="a vl" style="left:40px;top:825px;color:#777"><div>1</div><div>0</div><div>0</div></div>
<div class="a vl" style="left:40px;top:867px;color:#777"><div>1</div><div>2</div><div>0</div></div>
<div class="a vl" style="left:40px;top:910px;color:#777"><div>1</div><div>4</div><div>0</div></div>
<div class="a vl" style="left:40px;top:952px;color:#777"><div>1</div><div>6</div><div>0</div></div>
<div class="a vl" style="left:40px;top:995px;color:#777"><div>1</div><div>8</div><div>0</div></div>
<div class="a" style="left:38px;top:121px;width:12px;height:20px;overflow:hidden"><div class="a vl" style="left:2px;top:-9px;color:#111"><div>2</div><div>0</div></div></div>
<!--/RULERS-->

<!-- scrollbars & status -->

<!--PANELS-->
<div class="t" style="left:47.5px;top:89.5px;font-size:11px;font-weight:bold;color:#3a3a3a;transform:scaleX(0.985);transform-origin:0 0">Tutorial Falzflyer.indd @ 75 %</div>
<div class="a" style="left:207px;top:90px;width:12px;height:11px;border:1px solid #b4b4b4;background:linear-gradient(#f4f4f4,#dcdcdc)"></div>
<svg class="a" style="left:207px;top:90px" width="12" height="11"><path d="M3.2 2.7 L8.8 8.3 M8.8 2.7 L3.2 8.3" stroke="#707070" stroke-width="1.5"/></svg>
<div class="a" style="left:8px;top:101px;width:26px;height:1px;background:#c8c8c8;box-shadow:0 1px 0 #fff"></div>
<div class="a" style="left:9px;top:115px;width:24px;height:19px;border:1px solid #5a5a5a;border-radius:4px;background:linear-gradient(#dadada,#f2f2f2 50%,#d8d8d8)"></div>
<div class="a" style="left:8px;top:201px;width:27px;height:1px;background:#b8b8b8;box-shadow:0 1px 0 #fff"></div>
<div class="t" style="left:14px;top:205px;font-family:'Liberation Serif',serif;font-weight:bold;font-size:18px;color:#111">T</div>
<div class="a" style="left:8px;top:334px;width:27px;height:1px;background:#b8b8b8;box-shadow:0 1px 0 #fff"></div>
<div class="a" style="left:8px;top:425px;width:27px;height:1px;background:#b8b8b8;box-shadow:0 1px 0 #fff"></div>
<div class="a" style="left:8px;top:516px;width:27px;height:1px;background:#b8b8b8;box-shadow:0 1px 0 #fff"></div>
<div class="a" style="left:10px;top:522px;width:13px;height:13px;background:#d8841c;border:1px solid #9a6214"></div>
<div class="a" style="left:8px;top:553px;width:27px;height:1px;background:#b8b8b8;box-shadow:0 1px 0 #fff"></div>
<div class="t" style="left:24px;top:557px;font-family:'Liberation Serif',serif;font-size:9px;color:#888">T</div>
<div class="a" style="left:8px;top:569px;width:27px;height:1px;background:#b8b8b8;box-shadow:0 1px 0 #fff"></div>
<div class="a" style="left:9px;top:573px;width:24px;height:19px;border:1px solid #666;border-radius:4px;background:linear-gradient(#e4e4e4,#f8f8f8 50%,#dcdcdc)"></div>
<div class="a" style="left:13px;top:576px;width:15px;height:13px;border:1px solid #222;background:#fff"></div>
<div class="a" style="left:8px;top:596px;width:27px;height:1px;background:#b8b8b8;box-shadow:0 1px 0 #fff"></div>
<div class="a" style="left:9px;top:602px;width:24px;height:18px;border:1px solid #666;border-radius:4px;background:linear-gradient(#e4e4e4,#f8f8f8 50%,#dcdcdc)"></div>
<div class="a" style="left:14px;top:605px;width:14px;height:12px;border:1px solid #222;background:linear-gradient(#444 0 3px,#999 3px)"></div>
<div class="a" style="left:2px;top:110px;width:39px;height:29px;border:4.5px solid #f00;border-radius:3px"></div>
<div class="a" style="left:1883px;top:101px;width:29px;height:1px;background:#c8c8c8;box-shadow:0 1px 0 #fff"></div>
<div class="a" style="left:1880px;top:200px;width:35px;height:1px;background:#555"></div>
<div class="a" style="left:1884px;top:204px;width:27px;height:2px;background:repeating-linear-gradient(90deg,#b8b8b8 0 1px,transparent 1px 2px)"></div>
<div class="a" style="left:1880px;top:305px;width:35px;height:1px;background:#555"></div>
<div class="a" style="left:1884px;top:309px;width:27px;height:2px;background:repeating-linear-gradient(90deg,#b8b8b8 0 1px,transparent 1px 2px)"></div>
<div class="a" style="left:1880px;top:409px;width:35px;height:1px;background:#555"></div>
<div class="a" style="left:1884px;top:413px;width:27px;height:2px;background:repeating-linear-gradient(90deg,#b8b8b8 0 1px,transparent 1px 2px)"></div>
<div class="a" style="left:1880px;top:541px;width:35px;height:1px;background:#555"></div>
<div class="a" style="left:1884px;top:545px;width:27px;height:2px;background:repeating-linear-gradient(90deg,#b8b8b8 0 1px,transparent 1px 2px)"></div>
<div class="a" style="left:1880px;top:616px;width:35px;height:1px;background:#555"></div>
<div class="a" style="left:1884px;top:620px;width:27px;height:2px;background:repeating-linear-gradient(90deg,#b8b8b8 0 1px,transparent 1px 2px)"></div>
<div class="a" style="left:1880px;top:661px;width:35px;height:1px;background:#555"></div>
<div class="a" style="left:1884px;top:665px;width:27px;height:2px;background:repeating-linear-gradient(90deg,#b8b8b8 0 1px,transparent 1px 2px)"></div>
<div class="a" style="left:1880px;top:764px;width:35px;height:1px;background:#555"></div>
<div class="a" style="left:1884px;top:768px;width:27px;height:2px;background:repeating-linear-gradient(90deg,#b8b8b8 0 1px,transparent 1px 2px)"></div>
<div class="a" style="left:1880px;top:808px;width:35px;height:1px;background:#555"></div>
<div class="t" style="left:1889px;top:350px;font-family:'Liberation Serif',serif;font-style:italic;font-weight:bold;font-size:16px;color:#333">fx</div>
<div class="t" style="left:1892px;top:427px;font-size:17px;font-weight:bold;color:#333">¶</div>
<div class="t" style="left:1895px;top:455px;font-size:16px;font-weight:bold;color:#333">¶</div>
<div class="t" style="left:1892px;top:485px;font-family:'Liberation Serif',serif;font-size:18px;font-style:italic;color:#333">A</div>
<div class="t" style="left:1887px;top:515px;font-family:'Liberation Serif',serif;font-size:15px;font-style:italic;color:#333">Aa</div>
<div class="t" style="left:1890px;top:779px;font-size:20px;font-weight:bold;font-style:italic;color:#333;transform:scaleX(1.0)">S</div>
<svg class="a" style="left:0;top:0" width="1920" height="1040"><path d="M9 86.5 l3 3-3 3z M13 86.5 l3 3-3 3z" fill="#ddd"/>
<path d="M17 119 L17 131 L19.6 128.3 L21.8 132.5 L23.4 131.7 L21.2 127.6 L24.6 127.3Z" fill="#111"/>
<path d="M17 141 L17 153 L19.6 150.3 L21.8 154 L23.4 153.2 L21.2 149.6 L24.6 149.3Z" fill="#fff" stroke="#111" stroke-width="1.2"/>
<path d="M16.5 158.5 h7 l2 2 v12.5 h-9z" fill="#e4e4e4" stroke="#222"/><path d="M22 163 L22 172 L24 170 L25.6 173.5 L26.8 173 L25.3 169.6 L28 169.5Z" fill="#111"/>
<path d="M12.5 181v14M30.5 181v14" stroke="#111" stroke-width="2"/><path d="M15 188.5h13" stroke="#111" stroke-width="1.2"/><path d="M14 188.5l4-3v6z M29 188.5l-4-3v6z" fill="#111"/>
<path d="M30 219 l-3.5 3.5 h3.5z" fill="#111"/>
<path d="M14.5 231.5 L25.5 243.5" stroke="#111" stroke-width="1.6"/>
<path d="M21 250 L16 259 L18.5 263 h5 L26 259Z" fill="#fff" stroke="#111" stroke-width="1.3"/><path d="M21 253v6" stroke="#111"/><rect x="17.5" y="263.5" width="7" height="3.5" fill="#111"/>
<path d="M30 265 l-3.5 3.5 h3.5z" fill="#111"/>
<path d="M14.5 287.5 L16 282 L25.5 272.5 L29 276 L19.5 285.5Z" fill="#fff" stroke="#111" stroke-width="1.2"/><path d="M24 274 l3.5 3.5" stroke="#111"/>
<path d="M30 287 l-3.5 3.5 h3.5z" fill="#111"/>
<rect x="14.5" y="293.5" width="12" height="12" fill="#fff" stroke="#111" stroke-width="1.4"/><path d="M15 294 L26 305 M26 294 L15 305" stroke="#111" stroke-width="1.2"/>
<path d="M30 306 l-3.5 3.5 h3.5z" fill="#111"/>
<defs><linearGradient id="gr1" x1="0" y1="0" x2="1" y2="1"><stop offset="0" stop-color="#fff"/><stop offset="1" stop-color="#999"/></linearGradient></defs><rect x="14.5" y="315.5" width="13" height="12" fill="url(#gr1)" stroke="#222" stroke-width="1.2"/>
<path d="M30 328 l-3.5 3.5 h3.5z" fill="#111"/>
<circle cx="15.5" cy="345.5" r="2.3" fill="none" stroke="#111" stroke-width="1.4"/><circle cx="15.5" cy="352.5" r="2.3" fill="none" stroke="#111" stroke-width="1.4"/><path d="M17.5 346.5 L30 352 M17.5 351.5 L30 345.5" stroke="#111" stroke-width="1.5"/>
<rect x="14.5" y="364.5" width="13" height="12" fill="none" stroke="#111" stroke-dasharray="2,1.5"/><path d="M17 366 L17 374 L19 372 L20.5 375 L21.7 374.4 L20.3 371.5 L23 371.3Z" fill="#111"/><rect x="13" y="363" width="3" height="3" fill="#111"/><rect x="26" y="375" width="3" height="3" fill="#111"/>
<defs><linearGradient id="gr2"><stop offset="0" stop-color="#fff"/><stop offset="1" stop-color="#111"/></linearGradient></defs><rect x="13.5" y="384.5" width="15" height="12" fill="url(#gr2)" stroke="#333"/>
<defs><radialGradient id="gr3"><stop offset="0" stop-color="#eee"/><stop offset="1" stop-color="#333"/></radialGradient></defs><rect x="13.5" y="404.5" width="15" height="12" fill="url(#gr3)" stroke="#444"/>
<path d="M14.5 432.5 h13 v10 l-5 5 h-8z" fill="#fff" stroke="#111" stroke-width="1.2"/><path d="M17 436.5h8M17 439.5h8M17 442.5h5" stroke="#444"/>
<path d="M14 469 L15 465.5 L23 457.5 L25.5 460 L17.5 468Z" fill="#fff" stroke="#111" stroke-width="1.2"/><path d="M22 455.5 L26 452.5 L29 455.5 L26.5 459.5Z" fill="#111"/>
<path d="M30 469 l-3.5 3.5 h3.5z" fill="#111"/>
<path d="M16 480 q-2-3 0-3 q1.5 0 3 3 v-6 q0-2 1.5-2 q1.5 0 1.5 2 v5 v-6 q0-2 1.5-2 q1.5 0 1.5 2 v6 v-4.5 q0-1.8 1.4-1.8 q1.4 0 1.4 1.8 v7 q0 7-6 7 q-4 0-6-4z" fill="#fff" stroke="#111" stroke-width="1.1"/>
<circle cx="18.5" cy="500.5" r="4.2" fill="#fff" stroke="#111" stroke-width="1.6"/><path d="M21.5 503.5 L27 509.5" stroke="#111" stroke-width="2.6"/>
<rect x="19.5" y="530.5" width="11" height="11" fill="#fff" stroke="#222"/><rect x="21.5" y="532.5" width="7" height="7" fill="#f4f4f4" stroke="#333"/>
<path d="M26.5 524.5 h3 v2" fill="none" stroke="#111" stroke-width="1.2"/><circle cx="26.5" cy="524.5" r="1" fill="#111"/><path d="M28 527 h3 l-1.5 1.5z" fill="#111"/>
<rect x="15" y="545" width="5" height="5" fill="#111"/><rect x="10.5" y="541.5" width="6" height="6" fill="#fff" stroke="#333"/><path d="M11.5 546.5 L15.5 542.5" stroke="#d01040" stroke-width="1"/>
<rect x="10.5" y="557.5" width="10" height="7" fill="#777" stroke="#222"/><rect x="12" y="559" width="6" height="4" fill="#eee"/>
<path d="M1911 86.5 l-3 3 3 3z M1907 86.5 l-3 3 3 3z" fill="#ddd"/>
<path d="M1888 126 L1898 121 L1908 126 L1898 131Z" fill="#333"/><path d="M1888 121 L1898 115.5 L1908 121 L1898 126.5Z" fill="#fff" stroke="#333" stroke-width="1.1"/><path d="M1892 121 L1898 118 L1904 121 L1898 124Z" fill="#999"/>
<g fill="none" stroke="#222" stroke-width="1.5"><ellipse cx="1893" cy="149" rx="3.5" ry="3"/><ellipse cx="1903" cy="156" rx="3.5" ry="3"/><path d="M1895.5 151.5 L1900 154"/></g>
<path d="M1889.5 191 v-13 h4 l3 3 v10z M1907.5 191 v-13 h-4 l-3 3 v10z" fill="#ddd" stroke="#222" stroke-width="1.1"/><path d="M1898.5 174v19" stroke="#222"/>
<rect x="1889" y="220" width="17" height="12" fill="#222"/><rect x="1890" y="221" width="3" height="3" fill="#777"/><rect x="1890" y="225" width="3" height="3" fill="#999"/><rect x="1890" y="229" width="3" height="3" fill="#bbb"/><rect x="1894" y="221" width="3" height="3" fill="#888"/><rect x="1894" y="225" width="3" height="3" fill="#aaa"/><rect x="1894" y="229" width="3" height="3" fill="#ddd"/><rect x="1898" y="221" width="3" height="3" fill="#aaa"/><rect x="1898" y="225" width="3" height="3" fill="#ccc"/><rect x="1898" y="229" width="3" height="3" fill="#eee"/><rect x="1902" y="221" width="3" height="3" fill="#ccc"/><rect x="1902" y="225" width="3" height="3" fill="#eee"/><rect x="1902" y="229" width="3" height="3" fill="#fff"/>
<path d="M1890 258 q-3-8 6-10 q9-2 11 3 q1 3-3 3 q-3 0-2 3 q1 4-5 5 q-5 1-7-4z" fill="#333"/><circle cx="1896" cy="252" r="1.5" fill="#ccc"/><circle cx="1901" cy="251" r="1.5" fill="#ccc"/><circle cx="1893" cy="256" r="1.5" fill="#ccc"/>
<defs><linearGradient id="gr4"><stop offset="0" stop-color="#fff"/><stop offset="1" stop-color="#222"/></linearGradient></defs><rect x="1889.5" y="280.5" width="17" height="11" fill="url(#gr4)" stroke="#222"/>
<path d="M1889 323.5h17" stroke="#222" stroke-width="1"/><path d="M1889 328h17" stroke="#222" stroke-width="2"/><path d="M1889 334h17" stroke="#222" stroke-width="3"/>
<rect x="1892.5" y="382.5" width="13" height="11" fill="#ccc" stroke="#222"/><path d="M1894 384 h10 v8z" fill="#fff"/><rect x="1889.5" y="389.5" width="7" height="7" fill="#fff" stroke="#222"/>
<rect x="1889.5" y="465.5" width="7" height="6" fill="#fff" stroke="#222"/>
<rect x="1889.5" y="496.5" width="6" height="6" fill="#fff" stroke="#222"/>
<path d="M1891.5 558v16" stroke="#222"/><rect x="1893" y="560" width="7" height="5" fill="#666"/><rect x="1893" y="567" width="13" height="5" fill="#222"/>
<rect x="1889" y="591" width="10" height="10" fill="#666"/><rect x="1894" y="596" width="11" height="11" fill="#111"/>
<path d="M1888 640h8M1893 637l3 3-3 3" stroke="#222" stroke-width="1.6" fill="none"/><rect x="1896.5" y="636.5" width="7" height="7" fill="#fff" stroke="#222"/><circle cx="1903" cy="646" r="4" fill="#333"/><circle cx="1903" cy="646" r="1.5" fill="#fff"/>
<rect x="1890.5" y="678.5" width="15" height="14" fill="#fff" stroke="#222"/><path d="M1890 682.5h16" stroke="#222" stroke-width="2"/><path d="M1891 686.5h14M1891 689.5h14" stroke="#777"/>
<rect x="1893.5" y="709.5" width="12" height="11" fill="#fff" stroke="#222"/><path d="M1893 712.5h13M1896 716.5h9" stroke="#555"/><rect x="1889.5" y="716.5" width="7" height="7" fill="#fff" stroke="#222"/>
<rect x="1893.5" y="738.5" width="12" height="11" fill="#fff" stroke="#222"/><path d="M1893 741.5h13" stroke="#222" stroke-width="2"/><rect x="1889.5" y="745.5" width="7" height="7" fill="#fff" stroke="#222"/></svg>
<div class="a" style="left:1864px;top:105px;width:15px;height:915px;background:linear-gradient(90deg,#e4e4e4,#f6f6f6 40%,#f0f0f0 70%,#dcdcdc)"></div>
<div class="a" style="left:1864px;top:121px;width:1px;height:899px;background:#d8d8d8"></div>
<div class="a" style="left:1865px;top:178px;width:13px;height:824px;border-bottom:1px solid #9a9a9a;background:linear-gradient(90deg,#f8f8f8,#e8e8e8 45%,#cdcdcd 80%,#bcbcbc)"></div>
<svg class="a" style="left:1864px;top:105px" width="15" height="915"><path d="M4 10 L7.5 6 L11 10Z" fill="#222"/><path d="M4 903 L11 903 L7.5 907Z" fill="#222"/><path d="M4 483.5h6M4 485.5h6M4 487.5h6" stroke="#555"/></svg>
<div class="a" style="left:38px;top:1020px;width:1826px;height:15px;background:linear-gradient(#fafafa,#ececec)"></div>
<div class="a" style="left:38px;top:1020px;width:128px;height:15px;background:#fff"></div>
<div class="a" style="left:320px;top:1021px;width:1544px;height:14px;background:linear-gradient(#f2f2f2,#e6e6e6)"></div>
<div class="a" style="left:788px;top:1021px;width:680px;height:14px;border:1px solid #9a9a9a;border-top-color:#c4c4c4;background:linear-gradient(#f8f8f8,#e4e4e4 50%,#c8c8c8)"></div>
<div class="a" style="left:1864px;top:1020px;width:15px;height:15px;background:#f0f0f0"></div>
<svg class="a" style="left:0;top:1018px" width="1920" height="18">
<path d="M41 5.5v7M47 5.5 L42 9 L47 12.5Z" stroke="#111" fill="#111" stroke-width="1.2"/>
<path d="M62 5.5 L58 9 L62 12.5Z" fill="#222"/>
<path d="M154 10h7l-3.5 4z" fill="#111"/>
<path d="M172 5.5 L176 9 L172 12.5Z" fill="#999"/><path d="M186 5.5 L190 9 L186 12.5Z M190.5 5.5v7" fill="#999" stroke="#999"/>
<circle cx="206" cy="10" r="5.5" fill="#22b022"/><circle cx="205" cy="8" r="2.5" fill="#8ee08e" opacity="0.7"/>
<path d="M286 8h5l-2.5 3z" fill="#333"/>
<circle cx="309" cy="10" r="5" fill="none" stroke="#444" stroke-width="1.3"/><rect x="306" y="7" width="5" height="5" fill="#fff" stroke="#333"/><path d="M314 14h3l-1.5 2z" fill="#111"/>
<path d="M332 6 L328 9.5 L332 13Z" fill="#333"/>
<path d="M1126.5 6v7M1128.5 6v7M1130.5 6v7" stroke="#444"/>
<path d="M1854 6 L1858 9.5 L1854 13Z" fill="#333"/>
<g fill="#999"><rect x="1872" y="13" width="1" height="1"/><rect x="1874" y="11" width="1" height="1"/><rect x="1874" y="13" width="1" height="1"/><rect x="1876" y="9" width="1" height="1"/><rect x="1876" y="11" width="1" height="1"/><rect x="1876" y="13" width="1" height="1"/></g>
</svg>
<div class="t" style="left:70px;top:1023px;font-size:10px;color:#111">2</div>
<div class="t" style="left:215px;top:1023px;font-size:9.5px;color:#222">Ohne Fehler</div>
<!--/PANELS-->

<!-- bottom border lines -->
<div class="a" style="left:4px;top:1035px;width:1912px;height:1px;background:#3c3c3c"></div>
<div class="a" style="left:1px;top:1036px;width:1918px;height:3px;background:#fdfdfd"></div>
<div class="a" style="left:1916px;top:37px;width:3px;height:1000px;background:#fdfdfd"></div>
<div class="a" style="left:1px;top:37px;width:3px;height:1000px;background:#fdfdfd"></div>
</body></html>
